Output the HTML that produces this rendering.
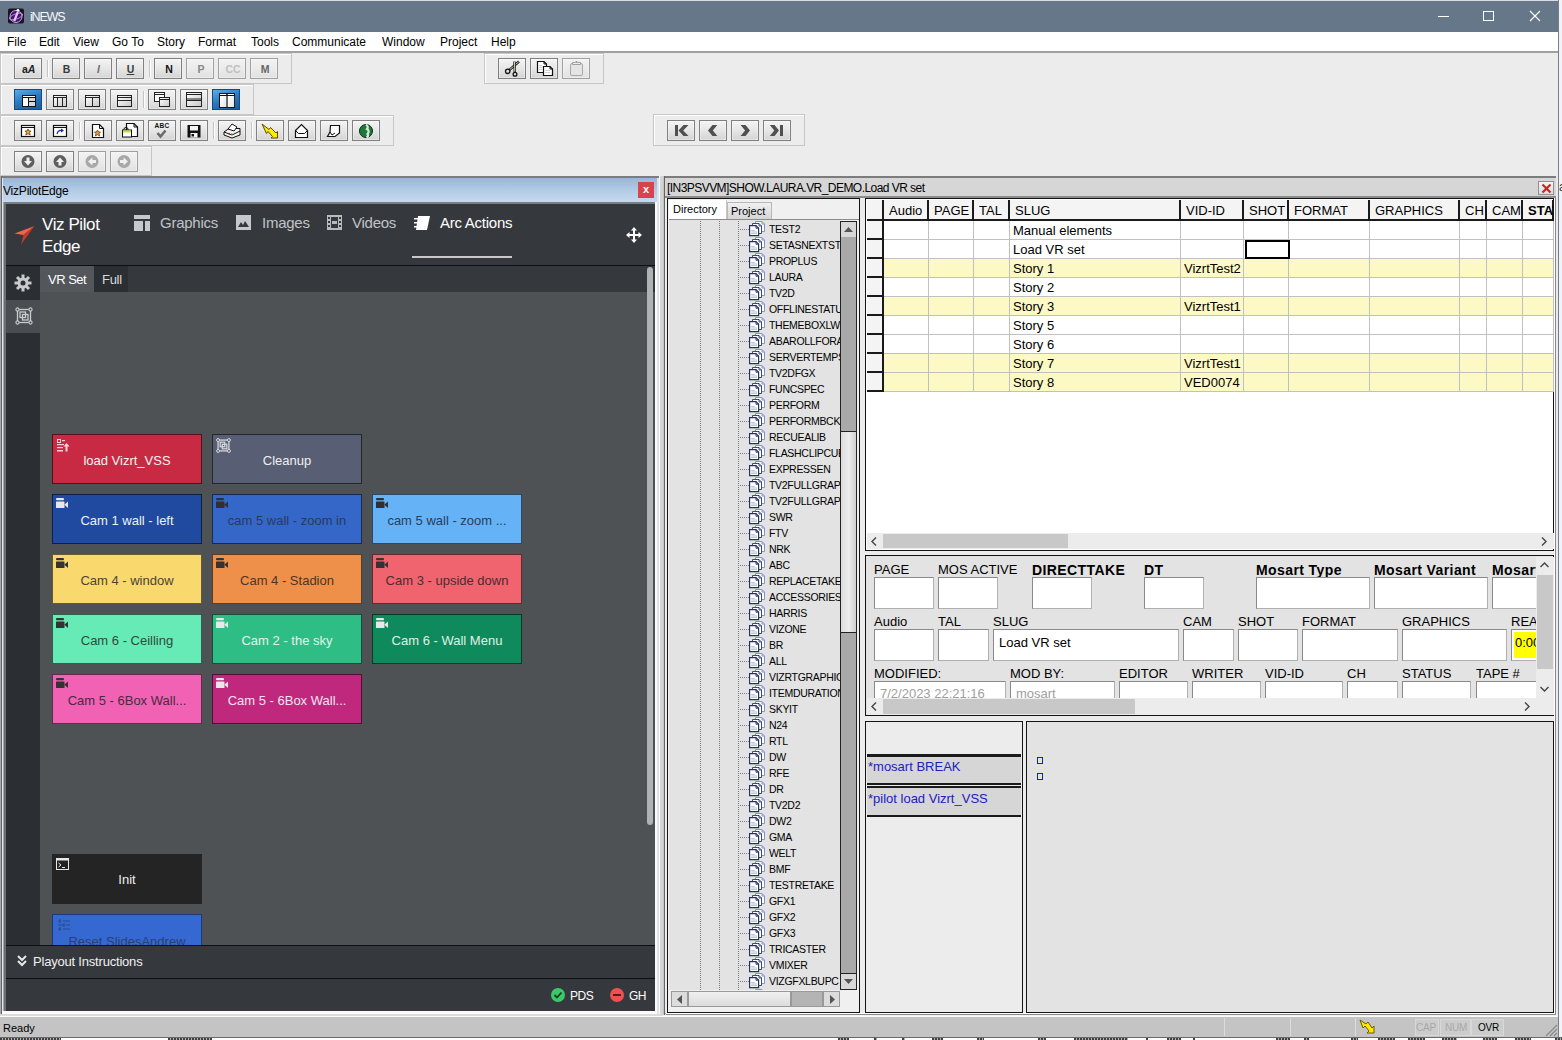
<!DOCTYPE html><html><head><meta charset="utf-8"><style>
*{margin:0;padding:0;box-sizing:border-box}
html,body{width:1562px;height:1040px;overflow:hidden;background:#f0f4f8;font-family:"Liberation Sans",sans-serif;}
div{position:absolute}
.t{white-space:nowrap;line-height:1}
.tb{border:1px solid #808080;background:linear-gradient(#f4f4f4,#e6e6e6 50%,#d4d4d4);box-shadow:inset 0 0 0 1px rgba(255,255,255,0.35);}
.tbd{border:1px solid #a0a0a0;background:linear-gradient(#f2f2f2,#ebebeb 50%,#e0e0e0);box-shadow:inset 0 0 0 1px rgba(255,255,255,0.35);}
.tbsel{border:1px solid #174a7c;background:linear-gradient(160deg,#58aee8,#2a78c0 50%,#1a5a9a);}
.grp{border:1px solid #c8c8c8;border-left-color:#fff;border-top-color:#fff;}
</style></head><body>
<div style="left:0px;top:0px;width:1559px;height:32px;background:#66778a;border-top:1px solid #d8dde3"></div>
<svg style="position:absolute;left:8px;top:8px" width="16" height="16" viewBox="0 0 16 16"><rect x="0" y="0.5" width="16" height="15" rx="2" fill="#1c1224"/><circle cx="8" cy="8.5" r="6" fill="#40156a" stroke="#d8b8f0" stroke-width="0.9"/><ellipse cx="8" cy="8.5" rx="7" ry="2.6" transform="rotate(-20 8 8.5)" fill="none" stroke="#c8a0e8" stroke-width="0.8"/><path d="M9.8 4 L6.2 13" stroke="#e8c8ff" stroke-width="2.2"/><circle cx="10" cy="2.3" r="1.4" fill="#fff"/></svg>
<div class="t" style="left:30px;top:11px;color:#f4f8ff;font-size:12.5px;letter-spacing:-1.2px">iNEWS</div>
<div style="left:1438px;top:16px;width:11px;height:1px;background:#fff"></div>
<div style="left:1483px;top:11px;width:11px;height:10px;border:1px solid #fff"></div>
<svg style="position:absolute;left:1529px;top:10px" width="12" height="12" viewBox="0 0 12 12"><path d="M1 1L11 11M11 1L1 11" stroke="#fff" stroke-width="1.2"/></svg>
<div style="left:1558px;top:0px;width:1px;height:1040px;background:#7a7e82"></div>
<div class="t" style="left:1559px;top:181px;font-size:12px;color:#333">a</div>
<div style="left:0px;top:32px;width:1558px;height:19px;background:#fff"></div>
<div class="t" style="left:7px;top:36px;color:#000;font-size:12px">File</div>
<div class="t" style="left:39px;top:36px;color:#000;font-size:12px">Edit</div>
<div class="t" style="left:73px;top:36px;color:#000;font-size:12px">View</div>
<div class="t" style="left:112px;top:36px;color:#000;font-size:12px">Go To</div>
<div class="t" style="left:157px;top:36px;color:#000;font-size:12px">Story</div>
<div class="t" style="left:198px;top:36px;color:#000;font-size:12px">Format</div>
<div class="t" style="left:251px;top:36px;color:#000;font-size:12px">Tools</div>
<div class="t" style="left:292px;top:36px;color:#000;font-size:12px">Communicate</div>
<div class="t" style="left:382px;top:36px;color:#000;font-size:12px">Window</div>
<div class="t" style="left:440px;top:36px;color:#000;font-size:12px">Project</div>
<div class="t" style="left:491px;top:36px;color:#000;font-size:12px">Help</div>
<div style="left:0px;top:51px;width:1558px;height:2px;background:#a0a0a0"></div>
<div style="left:0px;top:53px;width:1558px;height:123px;background:#ececec"></div>
<div style="left:0px;top:53px;width:1px;height:123px;background:#a0a0a0"></div>
<div style="left:0px;top:53px;width:292px;height:31px;border:1px solid #c6c6c6;box-shadow:inset 1px 1px 0 #fff"></div>
<div style="left:0px;top:84px;width:254px;height:31px;border:1px solid #c6c6c6;box-shadow:inset 1px 1px 0 #fff"></div>
<div style="left:0px;top:115px;width:394px;height:31px;border:1px solid #c6c6c6;box-shadow:inset 1px 1px 0 #fff"></div>
<div style="left:0px;top:146px;width:152px;height:30px;border:1px solid #c6c6c6;box-shadow:inset 1px 1px 0 #fff"></div>
<div style="left:484px;top:53px;width:120px;height:31px;border:1px solid #c6c6c6;box-shadow:inset 1px 1px 0 #fff"></div>
<div style="left:653px;top:114px;width:152px;height:32px;border:1px solid #c6c6c6;box-shadow:inset 1px 1px 0 #fff"></div>
<div class="tb" style="left:14px;top:58px;width:28px;height:21px;"><div class="t" style="left:7px;top:5px;font-size:10.5px;font-weight:bold;color:#222"><span>a</span><i>A</i></div></div>
<div style="left:47px;top:60px;width:2px;height:17px;background:#c4c4c4;border-right:1px solid #fff"></div>
<div class="tb" style="left:52px;top:58px;width:28px;height:21px;"><div class="t" style="left:0;width:27px;text-align:center;top:5px;font-size:10.5px;color:#3a3a3a;font-weight:bold">B</div></div>
<div class="tb" style="left:84px;top:58px;width:28px;height:21px;"><div class="t" style="left:0;width:27px;text-align:center;top:5px;font-size:10.5px;color:#707070;font-weight:bold;font-style:italic">I</div></div>
<div class="tb" style="left:116px;top:58px;width:28px;height:21px;"><div class="t" style="left:0;width:27px;text-align:center;top:5px;font-size:10.5px;color:#3a3a3a;font-weight:bold;text-decoration:underline">U</div></div>
<div style="left:149px;top:60px;width:2px;height:17px;background:#c4c4c4;border-right:1px solid #fff"></div>
<div class="tb" style="left:154px;top:58px;width:28px;height:21px;"><div class="t" style="left:0;width:28px;text-align:center;top:5px;font-size:10.5px;font-weight:bold;color:#111">N</div></div>
<div class="tbd" style="left:186px;top:58px;width:28px;height:21px;"><div class="t" style="left:0;width:28px;text-align:center;top:5px;font-size:10.5px;font-weight:bold;color:#888">P</div></div>
<div class="tbd" style="left:218px;top:58px;width:28px;height:21px;"><div class="t" style="left:0;width:28px;text-align:center;top:5px;font-size:10.5px;font-weight:bold;color:#c0c0c0">CC</div></div>
<div class="tbd" style="left:250px;top:58px;width:28px;height:21px;"><div class="t" style="left:0;width:28px;text-align:center;top:5px;font-size:10.5px;font-weight:bold;color:#666">M</div></div>
<svg width="0" height="0" style="position:absolute"><defs><linearGradient id="pg" x1="0" y1="0" x2="1" y2="1"><stop offset="0" stop-color="#fff"/><stop offset="1" stop-color="#c8c8c8"/></linearGradient></defs></svg>
<div class="tbsel" style="left:14px;top:89px;width:28px;height:21px;"><svg style="position:absolute;left:-1px;top:-1px" width="28" height="21" viewBox="0 0 28 21"><rect x="8.5" y="6.5" width="13" height="11" fill="#fff" stroke="#111"/><path d="M8.5 8.5H21.5M14.5 8.5V17.5M14.5 12.5H21.5" stroke="#111"/><rect x="15" y="9" width="6" height="3" fill="#d8d8d8"/><rect x="15" y="13" width="6" height="4" fill="#d8d8d8"/></svg></div>
<div class="tb" style="left:46px;top:89px;width:28px;height:21px;"><svg style="position:absolute;left:-1px;top:-1px" width="28" height="21" viewBox="0 0 28 21"><rect x="7.5" y="6.5" width="13" height="11" fill="url(#pg)" stroke="#222"/><path d="M7.5 8.5H20.5M11.5 8.5V17.5M16.5 8.5V17.5" stroke="#222"/></svg></div>
<div class="tb" style="left:78px;top:89px;width:28px;height:21px;"><svg style="position:absolute;left:-1px;top:-1px" width="28" height="21" viewBox="0 0 28 21"><rect x="7.5" y="6.5" width="14" height="11" fill="url(#pg)" stroke="#222"/><path d="M7.5 8.5H21.5M14.5 8.5V17.5" stroke="#222"/></svg></div>
<div class="tb" style="left:110px;top:89px;width:28px;height:21px;"><svg style="position:absolute;left:-1px;top:-1px" width="28" height="21" viewBox="0 0 28 21"><rect x="7.5" y="6.5" width="14" height="11" fill="url(#pg)" stroke="#222"/><path d="M7.5 8.5H21.5M7.5 11.5H21.5" stroke="#222"/></svg></div>
<div style="left:143px;top:91px;width:2px;height:17px;background:#c4c4c4;border-right:1px solid #fff"></div>
<div class="tb" style="left:148px;top:89px;width:28px;height:21px;"><svg style="position:absolute;left:-1px;top:-1px" width="28" height="21" viewBox="0 0 28 21"><rect x="6.5" y="3.5" width="10" height="9" fill="#fff" stroke="#222"/><path d="M6.5 5.5H16.5" stroke="#222"/><rect x="11.5" y="8.5" width="10" height="9" fill="url(#pg)" stroke="#222"/><path d="M11.5 10.5H21.5" stroke="#222"/></svg></div>
<div class="tb" style="left:180px;top:89px;width:28px;height:21px;"><svg style="position:absolute;left:-1px;top:-1px" width="28" height="21" viewBox="0 0 28 21"><rect x="6.5" y="3.5" width="15" height="14" fill="url(#pg)" stroke="#222"/><path d="M6.5 5.5H21.5M6.5 10H21.5M6.5 11.5H21.5" stroke="#222"/></svg></div>
<div class="tbsel" style="left:212px;top:89px;width:28px;height:21px;"><svg style="position:absolute;left:-1px;top:-1px" width="28" height="21" viewBox="0 0 28 21"><rect x="7.5" y="4.5" width="15" height="14" fill="#fff" stroke="#111"/><path d="M15 4.5V18.5" stroke="#111" stroke-width="1.5"/><path d="M7.5 6.5H22.5" stroke="#111"/><rect x="8" y="7" width="6.5" height="11" fill="url(#pg)" opacity="0.5"/><rect x="15.7" y="7" width="6.5" height="11" fill="url(#pg)" opacity="0.5"/></svg></div>
<div class="tb" style="left:14px;top:120px;width:28px;height:21px;"><svg style="position:absolute;left:-1px;top:-1px" width="28" height="21" viewBox="0 0 28 21"><rect x="7.5" y="5.5" width="13" height="11" fill="#fff" stroke="#111" stroke-width="1.2"/><path d="M7.5 7.5H20.5" stroke="#111"/><path d="M14 9 L15 11 L17 11 L15.5 12.7 L16.2 15 L14 13.6 L11.8 15 L12.5 12.7 L11 11 L13 11 Z" fill="#f0a040" stroke="#6a3a10" stroke-width="0.8"/></svg></div>
<div class="tb" style="left:46px;top:120px;width:28px;height:21px;"><svg style="position:absolute;left:-1px;top:-1px" width="28" height="21" viewBox="0 0 28 21"><rect x="7.5" y="5.5" width="13" height="11" fill="#fff" stroke="#111" stroke-width="1.2"/><path d="M7.5 7.5H20.5" stroke="#111"/><path d="M11 14 Q12 10 16 10.5" stroke="#1a2a9a" stroke-width="1.2" fill="none"/><path d="M15 8.5 L18 10.5 L15 12.5 Z" fill="#1a2a9a"/></svg></div>
<div style="left:79px;top:122px;width:2px;height:17px;background:#c4c4c4;border-right:1px solid #fff"></div>
<div class="tb" style="left:84px;top:120px;width:28px;height:21px;"><svg style="position:absolute;left:-1px;top:-1px" width="28" height="21" viewBox="0 0 28 21"><path d="M8.5 4.5H15.5L19.5 8.5V17.5H8.5Z" fill="#fff" stroke="#111" stroke-width="1.2"/><path d="M15.5 4.5V8.5H19.5" stroke="#111" fill="none"/><path d="M13.5 10 L14.5 12 L16.5 12 L15.0 13.7 L15.7 16 L13.5 14.6 L11.3 16 L12.0 13.7 L10.5 12 L12.5 12 Z" fill="#f0a040" stroke="#6a3a10" stroke-width="0.8"/></svg></div>
<div class="tb" style="left:116px;top:120px;width:28px;height:21px;"><svg style="position:absolute;left:-1px;top:-1px" width="28" height="21" viewBox="0 0 28 21"><path d="M10.5 3.5H18L21.5 7V16.5H10.5Z" fill="#fff" stroke="#111" stroke-width="1.2"/><path d="M18 3.5V7H21.5" stroke="#111" fill="none"/><path d="M8 10V8.5Q10 6 12 8.5V10" stroke="#111" fill="none"/><rect x="6.5" y="10" width="9" height="7" fill="#fff" stroke="#111"/><rect x="7" y="10.5" width="8" height="2" fill="#c8e040"/></svg></div>
<div class="tb" style="left:148px;top:120px;width:28px;height:21px;"><svg style="position:absolute;left:-1px;top:-1px" width="28" height="21" viewBox="0 0 28 21"><text x="14" y="8" font-family="Liberation Sans" font-size="6.5" font-weight="bold" text-anchor="middle" fill="#111" letter-spacing="0.3">ABC</text><path d="M9.5 13 L12.5 16.5 L17.5 10.5" stroke="#6a6a6a" stroke-width="2.6" fill="none"/></svg></div>
<div class="tb" style="left:180px;top:120px;width:28px;height:21px;"><svg style="position:absolute;left:-1px;top:-1px" width="28" height="21" viewBox="0 0 28 21"><rect x="7.5" y="5" width="13" height="12.5" fill="#111"/><rect x="10" y="6" width="8" height="4.5" fill="#f4f4f4"/><rect x="10.5" y="13" width="7" height="4.5" fill="#f4f4f4"/><rect x="11.5" y="14" width="2.5" height="2.5" fill="#111"/></svg></div>
<div style="left:213px;top:122px;width:2px;height:17px;background:#c4c4c4;border-right:1px solid #fff"></div>
<div class="tb" style="left:218px;top:120px;width:28px;height:21px;"><svg style="position:absolute;left:-1px;top:-1px" width="28" height="21" viewBox="0 0 28 21"><path d="M6 12 L11 8.5 L22 8.5 L22 15 L14 18 L6 15 Z" fill="#f4f4f4" stroke="#111"/><path d="M10 9 L14 4 L19 7 L16 11 Z" fill="#fff" stroke="#111"/><path d="M6 12 L14 15 L22 11" stroke="#111" fill="none"/><rect x="10.5" y="13" width="1.5" height="1.5" fill="#d02020"/><rect x="13" y="13.5" width="1.5" height="1.5" fill="#20a040"/></svg></div>
<div style="left:251px;top:122px;width:2px;height:17px;background:#c4c4c4;border-right:1px solid #fff"></div>
<div class="tb" style="left:256px;top:120px;width:28px;height:21px;"><svg style="position:absolute;left:-1px;top:-1px" width="28" height="21" viewBox="0 0 28 21"><path d="M6 4 L13 9.5 L14.5 7.5 L20 13 L21.5 11.5 L21.5 18 L15 18 L16.5 16.5 L12 11.5 L10.5 13.5 Z" fill="#ffee00" stroke="#5a4a00" stroke-width="1"/></svg></div>
<div class="tb" style="left:288px;top:120px;width:28px;height:21px;"><svg style="position:absolute;left:-1px;top:-1px" width="28" height="21" viewBox="0 0 28 21"><path d="M7.5 10.5 L13.5 4.5 L19.5 10.5 V17.5 H7.5 Z" fill="#fff" stroke="#111" stroke-width="1.2"/><path d="M7.5 10.5 L10.5 13.5 H16.5 L19.5 10.5" stroke="#111" fill="none"/></svg></div>
<div class="tb" style="left:320px;top:120px;width:28px;height:21px;"><svg style="position:absolute;left:-1px;top:-1px" width="28" height="21" viewBox="0 0 28 21"><path d="M10.5 5.5 H19.5 V13 L15 16.5 H7.5 L10 12 Z" fill="#fff" stroke="#111" stroke-width="1.2"/><path d="M10 12 L12 15 L15 13" stroke="#111" fill="none"/></svg></div>
<div class="tb" style="left:352px;top:120px;width:28px;height:21px;"><svg style="position:absolute;left:-1px;top:-1px" width="28" height="21" viewBox="0 0 28 21"><circle cx="14" cy="11" r="6.5" fill="#1a7a3a" stroke="#0a2a10" stroke-width="1"/><path d="M14 4.5 Q17 7 15 9 Q18 11 15.5 14 Q17 16 14.5 17.5" stroke="#d8e8d8" stroke-width="2.2" fill="none"/></svg></div>
<div class="tb" style="left:667px;top:120px;width:28px;height:21px;"><svg style="position:absolute;left:-1px;top:-1px" width="28" height="21" viewBox="0 0 28 21"><rect x="8" y="5" width="3" height="11" fill="#505050"/><path d="M21.5 5 L16.5 5 L11.5 10.5 L16.5 16 L21.5 16 L16.2 10.5 Z" fill="#505050"/></svg></div>
<div class="tb" style="left:699px;top:120px;width:28px;height:21px;"><svg style="position:absolute;left:-1px;top:-1px" width="28" height="21" viewBox="0 0 28 21"><path d="M18.3 5 L13.5 5 L9 10.5 L13.5 16 L18.3 16 L13.8 10.5 Z" fill="#505050"/></svg></div>
<div class="tb" style="left:731px;top:120px;width:28px;height:21px;"><svg style="position:absolute;left:-1px;top:-1px" width="28" height="21" viewBox="0 0 28 21"><path d="M9.6 5 L14.5 5 L19 10.5 L14.5 16 L9.6 16 L14.1 10.5 Z" fill="#505050"/></svg></div>
<div class="tb" style="left:763px;top:120px;width:28px;height:21px;"><svg style="position:absolute;left:-1px;top:-1px" width="28" height="21" viewBox="0 0 28 21"><rect x="17" y="5" width="3" height="11" fill="#505050"/><path d="M6.8 5 L11.5 5 L16 10.5 L11.5 16 L6.8 16 L11.3 10.5 Z" fill="#505050"/></svg></div>
<div class="tb" style="left:14px;top:151px;width:28px;height:21px;"><svg style="position:absolute;left:-1px;top:-1px" width="28" height="21" viewBox="0 0 28 21"><circle cx="14" cy="10.5" r="6.5" fill="#5e5e5e"/><path d="M12.5 6.5H15.5V10H18L14 14.5L10 10H12.5Z" fill="#f0f0f0"/></svg></div>
<div class="tb" style="left:46px;top:151px;width:28px;height:21px;"><svg style="position:absolute;left:-1px;top:-1px" width="28" height="21" viewBox="0 0 28 21"><circle cx="14" cy="10.5" r="6.5" fill="#5e5e5e"/><path d="M12.5 14.5H15.5V11H18L14 6.5L10 11H12.5Z" fill="#f0f0f0"/></svg></div>
<div class="tbd" style="left:78px;top:151px;width:28px;height:21px;"><svg style="position:absolute;left:-1px;top:-1px" width="28" height="21" viewBox="0 0 28 21"><circle cx="14" cy="10.5" r="6.5" fill="#a8a8a8"/><path d="M18 9H14.5V6.5L10 10.5L14.5 14.5V12H18Z" fill="#f0f0f0"/></svg></div>
<div class="tbd" style="left:110px;top:151px;width:28px;height:21px;"><svg style="position:absolute;left:-1px;top:-1px" width="28" height="21" viewBox="0 0 28 21"><circle cx="14" cy="10.5" r="6.5" fill="#a8a8a8"/><path d="M10 9H13.5V6.5L18 10.5L13.5 14.5V12H10Z" fill="#f0f0f0"/></svg></div>
<div class="tb" style="left:498px;top:58px;width:28px;height:21px;"><svg style="position:absolute;left:-1px;top:-1px" width="28" height="21" viewBox="0 0 28 21"><path d="M11.5 11.8 L21 3.5" stroke="#111" stroke-width="2.4"/><path d="M11.8 11.5 L20.8 3.7" stroke="#f4f4c8" stroke-width="0.9"/><path d="M16.8 14 L16.5 3.5" stroke="#111" stroke-width="2.4"/><path d="M16.8 13.8 L16.5 3.7" stroke="#f4f4c8" stroke-width="0.9"/><circle cx="9.7" cy="13.3" r="2.2" fill="none" stroke="#111" stroke-width="1.3"/><circle cx="17" cy="16.3" r="1.9" fill="none" stroke="#111" stroke-width="1.3"/></svg></div>
<div class="tb" style="left:530px;top:58px;width:28px;height:21px;"><svg style="position:absolute;left:-1px;top:-1px" width="28" height="21" viewBox="0 0 28 21"><g transform="translate(-1,0)"><path d="M8.5 3.5H15L17.5 6V14.5H8.5Z" fill="#fff" stroke="#111" stroke-width="1.2"/><path d="M15 3.5V6H17.5" fill="none" stroke="#111"/><path d="M14.5 8.5H21L23.5 11V17.5H14.5Z" fill="#fff" stroke="#111" stroke-width="1.2"/><path d="M21 8.5V11H23.5" fill="none" stroke="#111"/><path d="M10 7.5h3M10 9.5h3M10 11.5h3M16 12.5h5M16 14.5h5" stroke="#a0a0a0" stroke-width="0.5"/></g></svg></div>
<div class="tbd" style="left:562px;top:58px;width:28px;height:21px;"><svg style="position:absolute;left:-1px;top:-1px" width="28" height="21" viewBox="0 0 28 21"><rect x="8.5" y="5.5" width="12" height="12" rx="1.5" fill="#e4e4e4" stroke="#a8a8a8"/><path d="M10.5 6.5 V4.5 H13 Q14.5 2.5 16 4.5 H18.5 V6.5 Z" fill="#ececec" stroke="#a0a0a0"/><circle cx="14.5" cy="4.3" r="0.8" fill="#909090"/></svg></div>
<div style="left:0px;top:176px;width:663px;height:841px;background:#d4d4d4"></div>
<div style="left:0px;top:176px;width:660px;height:2px;background:#7c7c7c"></div>
<div style="left:0px;top:176px;width:1px;height:838px;background:#a6aaae"></div>
<div style="left:1px;top:176px;width:1px;height:838px;background:#62666a"></div>
<div style="left:2px;top:178px;width:1px;height:836px;background:#e4e8ec"></div>
<div style="left:3px;top:202px;width:1px;height:812px;background:#a0a4a8"></div>
<div style="left:4px;top:202px;width:2px;height:809px;background:#6a6e72"></div>
<div style="left:655px;top:202px;width:2px;height:812px;background:#fbfbfb"></div>
<div style="left:657px;top:178px;width:2px;height:836px;background:#dfe2e6"></div>
<div style="left:659px;top:176px;width:1px;height:838px;background:#fbfbfb"></div>
<div style="left:2px;top:1011px;width:655px;height:3px;background:#fbfbfb"></div>
<div style="left:0px;top:1014px;width:663px;height:2px;background:#dcdcdc"></div>
<div style="left:3px;top:178px;width:654px;height:24px;background:linear-gradient(#98b6da,#b4cce6 55%,#c6daee)"></div>
<div class="t" style="left:3px;top:185px;color:#000;font-size:12px;letter-spacing:-0.2px">VizPilotEdge</div>
<div style="left:638px;top:182px;width:16px;height:16px;background:#d9434a"><div class="t" style="left:0;width:16px;text-align:center;top:2px;color:#fff;font-size:11px;font-weight:bold">x</div></div>
<div style="left:4px;top:202px;width:651px;height:2px;background:#7a7e82"></div>
<div style="left:6px;top:204px;width:649px;height:807px;background:#35383c"></div>
<div style="left:6px;top:204px;width:649px;height:61px;background:#35383c"></div>
<svg style="position:absolute;left:14px;top:225px" width="21" height="20" viewBox="0 0 21 20"><path d="M20.5 1 L0.5 8.5 L9.5 10 Z" fill="#f2644a"/><path d="M20.5 1 L9.5 10 L7 19.5 Z" fill="#c63a2c"/></svg>
<div class="t" style="left:42px;top:216px;color:#fff;font-size:17px;letter-spacing:-0.4px">Viz Pilot</div>
<div class="t" style="left:42px;top:238px;color:#fff;font-size:17px;letter-spacing:-0.4px">Edge</div>
<svg style="position:absolute;left:134px;top:215px" width="16" height="16" viewBox="0 0 16 16"><rect x="0" y="0" width="16" height="4" fill="#c6c9cc"/><rect x="0" y="6" width="9" height="10" fill="#c6c9cc"/><rect x="11" y="6" width="5" height="10" fill="#c6c9cc"/></svg>
<div class="t" style="left:160px;top:215px;color:#c0c4c8;font-size:15px;letter-spacing:-0.25px">Graphics</div>
<svg style="position:absolute;left:236px;top:215px" width="15" height="15" viewBox="0 0 15 15"><rect x="0" y="0" width="15" height="15" fill="#c6c9cc"/><path d="M2 12 L5 7 L7 10 L9 6 L13 12 Z" fill="#35383c"/></svg>
<div class="t" style="left:262px;top:215px;color:#c0c4c8;font-size:15px;letter-spacing:-0.25px">Images</div>
<svg style="position:absolute;left:327px;top:215px" width="15" height="15" viewBox="0 0 15 15"><rect x="0" y="0" width="15" height="15" fill="#b8bbbe"/><rect x="4" y="2" width="7" height="11" fill="#35383c"/><rect x="5" y="6" width="5" height="3" fill="#b8bbbe"/><rect x="1" y="2" width="2" height="2" fill="#35383c"/><rect x="1" y="6" width="2" height="2" fill="#35383c"/><rect x="1" y="10" width="2" height="2" fill="#35383c"/><rect x="12" y="2" width="2" height="2" fill="#35383c"/><rect x="12" y="6" width="2" height="2" fill="#35383c"/><rect x="12" y="10" width="2" height="2" fill="#35383c"/></svg>
<div class="t" style="left:352px;top:215px;color:#c0c4c8;font-size:15px;letter-spacing:-0.25px">Videos</div>
<svg style="position:absolute;left:414px;top:216px" width="16" height="14" viewBox="0 0 16 14"><path d="M4 0 L16 0 L13 14 L2 14 Z" fill="#fff"/><rect x="0" y="2" width="4" height="1.5" fill="#fff"/><rect x="0" y="6" width="4" height="1.5" fill="#fff"/><rect x="0" y="10" width="4" height="1.5" fill="#fff"/></svg>
<div class="t" style="left:440px;top:215px;color:#fff;font-size:15px;letter-spacing:-0.25px">Arc Actions</div>
<div style="left:412px;top:256px;width:100px;height:2px;background:#c8c8c8"></div>
<svg style="position:absolute;left:626px;top:227px" width="16" height="16" viewBox="0 0 16 16"><path d="M8 0 L11 3.5 L9 3.5 L9 7 L12.5 7 L12.5 5 L16 8 L12.5 11 L12.5 9 L9 9 L9 12.5 L11 12.5 L8 16 L5 12.5 L7 12.5 L7 9 L3.5 9 L3.5 11 L0 8 L3.5 5 L3.5 7 L7 7 L7 3.5 L5 3.5 Z" fill="#fff"/></svg>
<div style="left:6px;top:265px;width:649px;height:1px;background:#0e0f10"></div>
<div style="left:6px;top:266px;width:649px;height:26px;background:#35383c"></div>
<div style="left:40px;top:292px;width:615px;height:653px;background:#4e5254"></div>
<div style="left:6px;top:266px;width:34px;height:679px;background:#2b2e32"></div>
<div style="left:6px;top:300px;width:34px;height:33px;background:#4a4e52"></div>
<svg style="position:absolute;left:14px;top:274px" width="18" height="18" viewBox="0 0 18 18"><g fill="#c8cacc"><circle cx="9" cy="9" r="5.5"/><rect x="7.5" y="0.5" width="3" height="17"/><rect x="0.5" y="7.5" width="17" height="3"/><rect x="7.5" y="0.5" width="3" height="17" transform="rotate(45 9 9)"/><rect x="7.5" y="0.5" width="3" height="17" transform="rotate(-45 9 9)"/></g><circle cx="9" cy="9" r="2.5" fill="#2b2e32"/></svg>
<svg style="position:absolute;left:15px;top:307px" width="18" height="18" viewBox="0 0 18 18"><g fill="none" stroke="#c8cacc" stroke-width="1.3"><rect x="2.5" y="2.5" width="13" height="13"/><rect x="5" y="5" width="5.5" height="5.5" fill="#4a4e52"/><rect x="7.5" y="7.5" width="5.5" height="5.5"/></g><g fill="#4a4e52" stroke="#c8cacc" stroke-width="1.1"><circle cx="2.5" cy="2.5" r="1.6"/><circle cx="15.5" cy="2.5" r="1.6"/><circle cx="2.5" cy="15.5" r="1.6"/><circle cx="15.5" cy="15.5" r="1.6"/></g></svg>
<div style="left:40px;top:266px;width:54px;height:26px;background:#53575b"></div>
<div class="t" style="left:48px;top:273px;color:#fff;font-size:13px;letter-spacing:-0.5px">VR Set</div>
<div style="left:94px;top:266px;width:34px;height:26px;background:#2b2e32"></div>
<div class="t" style="left:102px;top:273px;color:#d8dadc;font-size:13px;letter-spacing:-0.3px">Full</div>
<div style="left:647px;top:267px;width:6px;height:558px;background:#aeb2b4;border-radius:3px"></div>
<div style="left:52px;top:434px;width:150px;height:50px;background:#c92a43;border:1px solid #54111c"><svg style="position:absolute;left:4px;top:4px" width="13" height="13" viewBox="0 0 13 13"><g fill="#f4d4da"><rect x="0" y="0" width="4" height="4"/><rect x="5" y="1" width="3" height="1.2"/><rect x="0" y="5" width="7" height="1.2"/><rect x="0" y="8" width="6" height="1.2"/><rect x="0" y="11" width="6" height="1.5"/><path d="M9.5 4 L12.5 7.5 L10.5 7.5 L10.5 12.5 L8.5 12.5 L8.5 7.5 L6.5 7.5 Z"/></g><rect x="1" y="1" width="2" height="2" fill="#cf2a45"/></svg><div class="t" style="left:0;width:148px;text-align:center;top:19px;font-size:13px;color:#f4f4f4;">load Vizrt_VSS</div></div>
<div style="left:212px;top:434px;width:150px;height:50px;background:#585f74;border:1px solid #242730"><svg style="position:absolute;left:3px;top:3px" width="15" height="15" viewBox="0 0 18 18"><g fill="none" stroke="#d8dae0" stroke-width="1.5"><rect x="2.5" y="2.5" width="13" height="13"/><rect x="5" y="5" width="5.5" height="5.5" fill="#585f74"/><rect x="7.5" y="7.5" width="5.5" height="5.5"/></g><g fill="#585f74" stroke="#d8dae0" stroke-width="1.2"><circle cx="2.5" cy="2.5" r="1.8"/><circle cx="15.5" cy="2.5" r="1.8"/><circle cx="2.5" cy="15.5" r="1.8"/><circle cx="15.5" cy="15.5" r="1.8"/></g></svg><div class="t" style="left:0;width:148px;text-align:center;top:19px;font-size:13px;color:#f0f0f0;">Cleanup</div></div>
<div style="left:52px;top:494px;width:150px;height:50px;background:#1f4aa0;border:1px solid #0d1f43"><svg style="position:absolute;left:3px;top:3px" width="13" height="11" viewBox="0 0 13 11"><rect x="0" y="0" width="8" height="2.2" rx="1" fill="#e8e8e8"/><rect x="0" y="3.4" width="8.5" height="6.6" rx="0.6" fill="#e8e8e8"/><path d="M8.3 6.7 L12 3.6 L12 10 Z" fill="#e8e8e8"/></svg><div class="t" style="left:0;width:148px;text-align:center;top:19px;font-size:13px;color:#f0f0f0;">Cam 1 wall - left</div></div>
<div style="left:212px;top:494px;width:150px;height:50px;background:#3567c8;border:1px solid #162b54"><svg style="position:absolute;left:3px;top:3px" width="13" height="11" viewBox="0 0 13 11"><rect x="0" y="0" width="8" height="2.2" rx="1" fill="#303030"/><rect x="0" y="3.4" width="8.5" height="6.6" rx="0.6" fill="#303030"/><path d="M8.3 6.7 L12 3.6 L12 10 Z" fill="#303030"/></svg><div class="t" style="left:0;width:148px;text-align:center;top:19px;font-size:13px;color:#2b3a5a;">cam 5 wall - zoom in</div></div>
<div style="left:372px;top:494px;width:150px;height:50px;background:#65b2f6;border:1px solid #2a4a67"><svg style="position:absolute;left:3px;top:3px" width="13" height="11" viewBox="0 0 13 11"><rect x="0" y="0" width="8" height="2.2" rx="1" fill="#303030"/><rect x="0" y="3.4" width="8.5" height="6.6" rx="0.6" fill="#303030"/><path d="M8.3 6.7 L12 3.6 L12 10 Z" fill="#303030"/></svg><div class="t" style="left:0;width:148px;text-align:center;top:19px;font-size:13px;color:#2a3f55;">cam 5 wall - zoom ...</div></div>
<div style="left:52px;top:554px;width:150px;height:50px;background:#f9d86e;border:1px solid #685a2e"><svg style="position:absolute;left:3px;top:3px" width="13" height="11" viewBox="0 0 13 11"><rect x="0" y="0" width="8" height="2.2" rx="1" fill="#333"/><rect x="0" y="3.4" width="8.5" height="6.6" rx="0.6" fill="#333"/><path d="M8.3 6.7 L12 3.6 L12 10 Z" fill="#333"/></svg><div class="t" style="left:0;width:148px;text-align:center;top:19px;font-size:13px;color:#4a4536;">Cam 4 - window</div></div>
<div style="left:212px;top:554px;width:150px;height:50px;background:#ee8f4a;border:1px solid #633c1f"><svg style="position:absolute;left:3px;top:3px" width="13" height="11" viewBox="0 0 13 11"><rect x="0" y="0" width="8" height="2.2" rx="1" fill="#333"/><rect x="0" y="3.4" width="8.5" height="6.6" rx="0.6" fill="#333"/><path d="M8.3 6.7 L12 3.6 L12 10 Z" fill="#333"/></svg><div class="t" style="left:0;width:148px;text-align:center;top:19px;font-size:13px;color:#4a3526;">Cam 4 - Stadion</div></div>
<div style="left:372px;top:554px;width:150px;height:50px;background:#f06470;border:1px solid #642a2f"><svg style="position:absolute;left:3px;top:3px" width="13" height="11" viewBox="0 0 13 11"><rect x="0" y="0" width="8" height="2.2" rx="1" fill="#333"/><rect x="0" y="3.4" width="8.5" height="6.6" rx="0.6" fill="#333"/><path d="M8.3 6.7 L12 3.6 L12 10 Z" fill="#333"/></svg><div class="t" style="left:0;width:148px;text-align:center;top:19px;font-size:13px;color:#4a2c30;">Cam 3 - upside down</div></div>
<div style="left:52px;top:614px;width:150px;height:50px;background:#66ebb6;border:1px solid #2a624c"><svg style="position:absolute;left:3px;top:3px" width="13" height="11" viewBox="0 0 13 11"><rect x="0" y="0" width="8" height="2.2" rx="1" fill="#333"/><rect x="0" y="3.4" width="8.5" height="6.6" rx="0.6" fill="#333"/><path d="M8.3 6.7 L12 3.6 L12 10 Z" fill="#333"/></svg><div class="t" style="left:0;width:148px;text-align:center;top:19px;font-size:13px;color:#2e4a3e;">Cam 6 - Ceilling</div></div>
<div style="left:212px;top:614px;width:150px;height:50px;background:#2fbd86;border:1px solid #134f38"><svg style="position:absolute;left:3px;top:3px" width="13" height="11" viewBox="0 0 13 11"><rect x="0" y="0" width="8" height="2.2" rx="1" fill="#e8e8e8"/><rect x="0" y="3.4" width="8.5" height="6.6" rx="0.6" fill="#e8e8e8"/><path d="M8.3 6.7 L12 3.6 L12 10 Z" fill="#e8e8e8"/></svg><div class="t" style="left:0;width:148px;text-align:center;top:19px;font-size:13px;color:#e0f4ea;">Cam 2 - the sky</div></div>
<div style="left:372px;top:614px;width:150px;height:50px;background:#0f8a5c;border:1px solid #063926"><svg style="position:absolute;left:3px;top:3px" width="13" height="11" viewBox="0 0 13 11"><rect x="0" y="0" width="8" height="2.2" rx="1" fill="#e8e8e8"/><rect x="0" y="3.4" width="8.5" height="6.6" rx="0.6" fill="#e8e8e8"/><path d="M8.3 6.7 L12 3.6 L12 10 Z" fill="#e8e8e8"/></svg><div class="t" style="left:0;width:148px;text-align:center;top:19px;font-size:13px;color:#e0f0e8;">Cam 6 - Wall Menu</div></div>
<div style="left:52px;top:674px;width:150px;height:50px;background:#f162b4;border:1px solid #65294b"><svg style="position:absolute;left:3px;top:3px" width="13" height="11" viewBox="0 0 13 11"><rect x="0" y="0" width="8" height="2.2" rx="1" fill="#333"/><rect x="0" y="3.4" width="8.5" height="6.6" rx="0.6" fill="#333"/><path d="M8.3 6.7 L12 3.6 L12 10 Z" fill="#333"/></svg><div class="t" style="left:0;width:148px;text-align:center;top:19px;font-size:13px;color:#4a2a40;">Cam 5 - 6Box Wall...</div></div>
<div style="left:212px;top:674px;width:150px;height:50px;background:#c0287e;border:1px solid #501034"><svg style="position:absolute;left:3px;top:3px" width="13" height="11" viewBox="0 0 13 11"><rect x="0" y="0" width="8" height="2.2" rx="1" fill="#e8e8e8"/><rect x="0" y="3.4" width="8.5" height="6.6" rx="0.6" fill="#e8e8e8"/><path d="M8.3 6.7 L12 3.6 L12 10 Z" fill="#e8e8e8"/></svg><div class="t" style="left:0;width:148px;text-align:center;top:19px;font-size:13px;color:#f4e4ee;">Cam 5 - 6Box Wall...</div></div>
<div style="left:52px;top:854px;width:150px;height:50px;background:#242424"><svg style="position:absolute;left:4px;top:4px" width="14" height="13" viewBox="0 0 14 13"><rect x="0.5" y="0.5" width="12" height="11" fill="none" stroke="#e8e8e8"/><rect x="0.5" y="0.5" width="12" height="2" fill="#e8e8e8"/><path d="M2.5 5 L5 7 L2.5 9 M6 9.5 L9 9.5" stroke="#e8e8e8" fill="none"/></svg><div class="t" style="left:0;width:150px;text-align:center;top:19px;font-size:13px;color:#f0f0f0">Init</div></div>
<div style="left:52px;top:914px;width:150px;height:31px;background:#3568d0;border:1px solid #1a3a80;border-bottom:none;overflow:hidden"><svg style="position:absolute;left:4px;top:4px" width="14" height="13" viewBox="0 0 14 13"><g stroke="#2a4a8a" stroke-width="1.2"><path d="M1 2h3M6 2h7M3 0v4M1 6h6M9 6h4M7 4v4M1 10h3M6 10h7M3 8v4"/></g></svg><div class="t" style="left:0;width:148px;text-align:center;top:20px;font-size:13px;color:#2a4070">Reset SlidesAndrew</div></div>
<div style="left:6px;top:945px;width:649px;height:1px;background:#0e0f10"></div>
<div style="left:6px;top:946px;width:649px;height:32px;background:#35383c"></div>
<svg style="position:absolute;left:17px;top:955px" width="10" height="12" viewBox="0 0 10 12"><path d="M1 1 L5 5 L9 1 M1 6 L5 10 L9 6" stroke="#e8e8e8" stroke-width="2" fill="none"/></svg>
<div class="t" style="left:33px;top:955px;color:#f0f0f0;font-size:13px;letter-spacing:-0.2px">Playout Instructions</div>
<div style="left:6px;top:978px;width:649px;height:1px;background:#0e0f10"></div>
<div style="left:6px;top:979px;width:649px;height:32px;background:#35383c"></div>
<svg style="position:absolute;left:551px;top:988px" width="14" height="14" viewBox="0 0 14 14"><circle cx="7" cy="7" r="7" fill="#3cc86a"/><path d="M3.5 7 L6 9.5 L10.5 4.5" stroke="#14401e" stroke-width="1.8" fill="none"/></svg>
<div class="t" style="left:570px;top:990px;color:#fff;font-size:12px;letter-spacing:-0.5px">PDS</div>
<svg style="position:absolute;left:610px;top:988px" width="14" height="14" viewBox="0 0 14 14"><circle cx="7" cy="7" r="7" fill="#f05050"/><rect x="3" y="6" width="8" height="2" fill="#5a1818"/></svg>
<div class="t" style="left:629px;top:990px;color:#fff;font-size:12px;letter-spacing:-0.5px">GH</div>
<div style="left:663px;top:176px;width:895px;height:841px;background:#ececec"></div>
<div style="left:663px;top:176px;width:895px;height:2px;background:#7c7c7c"></div>
<div style="left:663px;top:176px;width:1px;height:840px;background:#c4c4c4"></div>
<div style="left:664px;top:176px;width:1px;height:840px;background:#646464"></div>
<div style="left:665px;top:196px;width:1px;height:818px;background:#a8a8a8"></div>
<div style="left:666px;top:198px;width:1px;height:816px;background:#f8f8f8"></div>
<div style="left:1556px;top:176px;width:2px;height:841px;background:#e8ecf0"></div>
<div style="left:665px;top:178px;width:891px;height:18px;background:#d6d6d6"></div>
<div class="t" style="left:667px;top:182px;color:#000;font-size:12px;letter-spacing:-0.55px">[IN3PSVVM]SHOW.LAURA.VR_DEMO.Load VR set</div>
<div style="left:1538px;top:181px;width:16px;height:14px;background:linear-gradient(#f4f4f4,#dcdcdc);border:1px solid #909090"><svg style="position:absolute;left:2px;top:1px" width="11" height="11" viewBox="0 0 11 11"><path d="M1.5 1.5L9.5 9.5M9.5 1.5L1.5 9.5" stroke="#c02828" stroke-width="2.2"/></svg></div>
<div style="left:665px;top:196px;width:891px;height:2px;background:#8c8c8c"></div>
<div style="left:665px;top:198px;width:891px;height:815px;background:#ececec"></div>
<div style="left:667px;top:198px;width:193px;height:815px;border:1px solid #141414;background:#f0f0f0"></div>
<div style="left:669px;top:200px;width:190px;height:19px;background:#f0f0f0"></div>
<div style="left:669px;top:200px;width:58px;height:20px;background:#fff;border-right:1px solid #c8c8c8"></div>
<div class="t" style="left:673px;top:204px;color:#000;font-size:11px">Directory</div>
<div style="left:727px;top:202px;width:45px;height:18px;background:linear-gradient(#f0f0f0,#d4d4d4);border:1px solid #b8b8b8;border-bottom:none"></div>
<div class="t" style="left:731px;top:206px;color:#000;font-size:11px">Project</div>
<div style="left:669px;top:219px;width:190px;height:1px;background:#8c8c8c"></div>
<div style="left:669px;top:220px;width:171px;height:773px;background:#e3e3e3;overflow:hidden"></div>
<div style="left:700px;top:221px;width:1px;height:772px;background-image:linear-gradient(#7a7a7a 50%,transparent 50%);background-size:1px 2px"></div>
<div style="left:719px;top:221px;width:1px;height:772px;background-image:linear-gradient(#7a7a7a 50%,transparent 50%);background-size:1px 2px"></div>
<div style="left:738px;top:221px;width:1px;height:772px;background-image:linear-gradient(#7a7a7a 50%,transparent 50%);background-size:1px 2px"></div>
<div style="left:740px;top:229px;width:9px;height:1px;background-image:linear-gradient(90deg,#7a7a7a 50%,transparent 50%);background-size:2px 1px"></div>
<div style="left:749px;top:221px;width:16px;height:16px;"><svg style="position:absolute;left:0;top:0" width="16" height="16" viewBox="0 0 16 16"><path d="M6.5 0.5 H13 L15.5 3 V10.5 H6.5 Z" fill="#fff" stroke="#8494cc"/><path d="M13 0.5 V3 H15.5" fill="none" stroke="#8494cc"/><path d="M3.5 2.5 H10 L12.5 5 V12.5 H3.5 Z" fill="#fff" stroke="#3a4a80"/><path d="M10 2.5 V5 H12.5" fill="none" stroke="#3a4a80"/><path d="M0.6 4.6 H7 L9.6 7.2 V14.6 H0.6 Z" fill="#fff" stroke="#253260" stroke-width="1.2"/><path d="M7 4.6 V7.2 H9.6" fill="none" stroke="#253260"/><path d="M2.2 9.5H5.5M2.2 11H8M2.2 12.6H8" stroke="#9aa4c8" stroke-width="0.7"/></svg></div>
<div class="t" style="left:769px;top:224px;font-size:10.5px;letter-spacing:-0.3px;color:#000;width:71px;overflow:hidden">TEST2</div>
<div style="left:740px;top:245px;width:9px;height:1px;background-image:linear-gradient(90deg,#7a7a7a 50%,transparent 50%);background-size:2px 1px"></div>
<div style="left:749px;top:237px;width:16px;height:16px;"><svg style="position:absolute;left:0;top:0" width="16" height="16" viewBox="0 0 16 16"><path d="M6.5 0.5 H13 L15.5 3 V10.5 H6.5 Z" fill="#fff" stroke="#8494cc"/><path d="M13 0.5 V3 H15.5" fill="none" stroke="#8494cc"/><path d="M3.5 2.5 H10 L12.5 5 V12.5 H3.5 Z" fill="#fff" stroke="#3a4a80"/><path d="M10 2.5 V5 H12.5" fill="none" stroke="#3a4a80"/><path d="M0.6 4.6 H7 L9.6 7.2 V14.6 H0.6 Z" fill="#fff" stroke="#253260" stroke-width="1.2"/><path d="M7 4.6 V7.2 H9.6" fill="none" stroke="#253260"/><path d="M2.2 9.5H5.5M2.2 11H8M2.2 12.6H8" stroke="#9aa4c8" stroke-width="0.7"/></svg></div>
<div class="t" style="left:769px;top:240px;font-size:10.5px;letter-spacing:-0.3px;color:#000;width:71px;overflow:hidden">SETASNEXTSTORY</div>
<div style="left:740px;top:261px;width:9px;height:1px;background-image:linear-gradient(90deg,#7a7a7a 50%,transparent 50%);background-size:2px 1px"></div>
<div style="left:749px;top:253px;width:16px;height:16px;"><svg style="position:absolute;left:0;top:0" width="16" height="16" viewBox="0 0 16 16"><path d="M6.5 0.5 H13 L15.5 3 V10.5 H6.5 Z" fill="#fff" stroke="#8494cc"/><path d="M13 0.5 V3 H15.5" fill="none" stroke="#8494cc"/><path d="M3.5 2.5 H10 L12.5 5 V12.5 H3.5 Z" fill="#fff" stroke="#3a4a80"/><path d="M10 2.5 V5 H12.5" fill="none" stroke="#3a4a80"/><path d="M0.6 4.6 H7 L9.6 7.2 V14.6 H0.6 Z" fill="#fff" stroke="#253260" stroke-width="1.2"/><path d="M7 4.6 V7.2 H9.6" fill="none" stroke="#253260"/><path d="M2.2 9.5H5.5M2.2 11H8M2.2 12.6H8" stroke="#9aa4c8" stroke-width="0.7"/></svg></div>
<div class="t" style="left:769px;top:256px;font-size:10.5px;letter-spacing:-0.3px;color:#000;width:71px;overflow:hidden">PROPLUS</div>
<div style="left:740px;top:277px;width:9px;height:1px;background-image:linear-gradient(90deg,#7a7a7a 50%,transparent 50%);background-size:2px 1px"></div>
<div style="left:749px;top:269px;width:16px;height:16px;"><svg style="position:absolute;left:0;top:0" width="16" height="16" viewBox="0 0 16 16"><path d="M6.5 0.5 H13 L15.5 3 V10.5 H6.5 Z" fill="#fff" stroke="#8494cc"/><path d="M13 0.5 V3 H15.5" fill="none" stroke="#8494cc"/><path d="M3.5 2.5 H10 L12.5 5 V12.5 H3.5 Z" fill="#fff" stroke="#3a4a80"/><path d="M10 2.5 V5 H12.5" fill="none" stroke="#3a4a80"/><path d="M0.6 4.6 H7 L9.6 7.2 V14.6 H0.6 Z" fill="#fff" stroke="#253260" stroke-width="1.2"/><path d="M7 4.6 V7.2 H9.6" fill="none" stroke="#253260"/><path d="M2.2 9.5H5.5M2.2 11H8M2.2 12.6H8" stroke="#9aa4c8" stroke-width="0.7"/></svg></div>
<div class="t" style="left:769px;top:272px;font-size:10.5px;letter-spacing:-0.3px;color:#000;width:71px;overflow:hidden">LAURA</div>
<div style="left:740px;top:293px;width:9px;height:1px;background-image:linear-gradient(90deg,#7a7a7a 50%,transparent 50%);background-size:2px 1px"></div>
<div style="left:749px;top:285px;width:16px;height:16px;"><svg style="position:absolute;left:0;top:0" width="16" height="16" viewBox="0 0 16 16"><path d="M6.5 0.5 H13 L15.5 3 V10.5 H6.5 Z" fill="#fff" stroke="#8494cc"/><path d="M13 0.5 V3 H15.5" fill="none" stroke="#8494cc"/><path d="M3.5 2.5 H10 L12.5 5 V12.5 H3.5 Z" fill="#fff" stroke="#3a4a80"/><path d="M10 2.5 V5 H12.5" fill="none" stroke="#3a4a80"/><path d="M0.6 4.6 H7 L9.6 7.2 V14.6 H0.6 Z" fill="#fff" stroke="#253260" stroke-width="1.2"/><path d="M7 4.6 V7.2 H9.6" fill="none" stroke="#253260"/><path d="M2.2 9.5H5.5M2.2 11H8M2.2 12.6H8" stroke="#9aa4c8" stroke-width="0.7"/></svg></div>
<div class="t" style="left:769px;top:288px;font-size:10.5px;letter-spacing:-0.3px;color:#000;width:71px;overflow:hidden">TV2D</div>
<div style="left:740px;top:309px;width:9px;height:1px;background-image:linear-gradient(90deg,#7a7a7a 50%,transparent 50%);background-size:2px 1px"></div>
<div style="left:749px;top:301px;width:16px;height:16px;"><svg style="position:absolute;left:0;top:0" width="16" height="16" viewBox="0 0 16 16"><path d="M6.5 0.5 H13 L15.5 3 V10.5 H6.5 Z" fill="#fff" stroke="#8494cc"/><path d="M13 0.5 V3 H15.5" fill="none" stroke="#8494cc"/><path d="M3.5 2.5 H10 L12.5 5 V12.5 H3.5 Z" fill="#fff" stroke="#3a4a80"/><path d="M10 2.5 V5 H12.5" fill="none" stroke="#3a4a80"/><path d="M0.6 4.6 H7 L9.6 7.2 V14.6 H0.6 Z" fill="#fff" stroke="#253260" stroke-width="1.2"/><path d="M7 4.6 V7.2 H9.6" fill="none" stroke="#253260"/><path d="M2.2 9.5H5.5M2.2 11H8M2.2 12.6H8" stroke="#9aa4c8" stroke-width="0.7"/></svg></div>
<div class="t" style="left:769px;top:304px;font-size:10.5px;letter-spacing:-0.3px;color:#000;width:71px;overflow:hidden">OFFLINESTATUS</div>
<div style="left:740px;top:325px;width:9px;height:1px;background-image:linear-gradient(90deg,#7a7a7a 50%,transparent 50%);background-size:2px 1px"></div>
<div style="left:749px;top:317px;width:16px;height:16px;"><svg style="position:absolute;left:0;top:0" width="16" height="16" viewBox="0 0 16 16"><path d="M6.5 0.5 H13 L15.5 3 V10.5 H6.5 Z" fill="#fff" stroke="#8494cc"/><path d="M13 0.5 V3 H15.5" fill="none" stroke="#8494cc"/><path d="M3.5 2.5 H10 L12.5 5 V12.5 H3.5 Z" fill="#fff" stroke="#3a4a80"/><path d="M10 2.5 V5 H12.5" fill="none" stroke="#3a4a80"/><path d="M0.6 4.6 H7 L9.6 7.2 V14.6 H0.6 Z" fill="#fff" stroke="#253260" stroke-width="1.2"/><path d="M7 4.6 V7.2 H9.6" fill="none" stroke="#253260"/><path d="M2.2 9.5H5.5M2.2 11H8M2.2 12.6H8" stroke="#9aa4c8" stroke-width="0.7"/></svg></div>
<div class="t" style="left:769px;top:320px;font-size:10.5px;letter-spacing:-0.3px;color:#000;width:71px;overflow:hidden">THEMEBOXLWD</div>
<div style="left:740px;top:341px;width:9px;height:1px;background-image:linear-gradient(90deg,#7a7a7a 50%,transparent 50%);background-size:2px 1px"></div>
<div style="left:749px;top:333px;width:16px;height:16px;"><svg style="position:absolute;left:0;top:0" width="16" height="16" viewBox="0 0 16 16"><path d="M6.5 0.5 H13 L15.5 3 V10.5 H6.5 Z" fill="#fff" stroke="#8494cc"/><path d="M13 0.5 V3 H15.5" fill="none" stroke="#8494cc"/><path d="M3.5 2.5 H10 L12.5 5 V12.5 H3.5 Z" fill="#fff" stroke="#3a4a80"/><path d="M10 2.5 V5 H12.5" fill="none" stroke="#3a4a80"/><path d="M0.6 4.6 H7 L9.6 7.2 V14.6 H0.6 Z" fill="#fff" stroke="#253260" stroke-width="1.2"/><path d="M7 4.6 V7.2 H9.6" fill="none" stroke="#253260"/><path d="M2.2 9.5H5.5M2.2 11H8M2.2 12.6H8" stroke="#9aa4c8" stroke-width="0.7"/></svg></div>
<div class="t" style="left:769px;top:336px;font-size:10.5px;letter-spacing:-0.3px;color:#000;width:71px;overflow:hidden">ABAROLLFORALL</div>
<div style="left:740px;top:357px;width:9px;height:1px;background-image:linear-gradient(90deg,#7a7a7a 50%,transparent 50%);background-size:2px 1px"></div>
<div style="left:749px;top:349px;width:16px;height:16px;"><svg style="position:absolute;left:0;top:0" width="16" height="16" viewBox="0 0 16 16"><path d="M6.5 0.5 H13 L15.5 3 V10.5 H6.5 Z" fill="#fff" stroke="#8494cc"/><path d="M13 0.5 V3 H15.5" fill="none" stroke="#8494cc"/><path d="M3.5 2.5 H10 L12.5 5 V12.5 H3.5 Z" fill="#fff" stroke="#3a4a80"/><path d="M10 2.5 V5 H12.5" fill="none" stroke="#3a4a80"/><path d="M0.6 4.6 H7 L9.6 7.2 V14.6 H0.6 Z" fill="#fff" stroke="#253260" stroke-width="1.2"/><path d="M7 4.6 V7.2 H9.6" fill="none" stroke="#253260"/><path d="M2.2 9.5H5.5M2.2 11H8M2.2 12.6H8" stroke="#9aa4c8" stroke-width="0.7"/></svg></div>
<div class="t" style="left:769px;top:352px;font-size:10.5px;letter-spacing:-0.3px;color:#000;width:71px;overflow:hidden">SERVERTEMPS</div>
<div style="left:740px;top:373px;width:9px;height:1px;background-image:linear-gradient(90deg,#7a7a7a 50%,transparent 50%);background-size:2px 1px"></div>
<div style="left:749px;top:365px;width:16px;height:16px;"><svg style="position:absolute;left:0;top:0" width="16" height="16" viewBox="0 0 16 16"><path d="M6.5 0.5 H13 L15.5 3 V10.5 H6.5 Z" fill="#fff" stroke="#8494cc"/><path d="M13 0.5 V3 H15.5" fill="none" stroke="#8494cc"/><path d="M3.5 2.5 H10 L12.5 5 V12.5 H3.5 Z" fill="#fff" stroke="#3a4a80"/><path d="M10 2.5 V5 H12.5" fill="none" stroke="#3a4a80"/><path d="M0.6 4.6 H7 L9.6 7.2 V14.6 H0.6 Z" fill="#fff" stroke="#253260" stroke-width="1.2"/><path d="M7 4.6 V7.2 H9.6" fill="none" stroke="#253260"/><path d="M2.2 9.5H5.5M2.2 11H8M2.2 12.6H8" stroke="#9aa4c8" stroke-width="0.7"/></svg></div>
<div class="t" style="left:769px;top:368px;font-size:10.5px;letter-spacing:-0.3px;color:#000;width:71px;overflow:hidden">TV2DFGX</div>
<div style="left:740px;top:389px;width:9px;height:1px;background-image:linear-gradient(90deg,#7a7a7a 50%,transparent 50%);background-size:2px 1px"></div>
<div style="left:749px;top:381px;width:16px;height:16px;"><svg style="position:absolute;left:0;top:0" width="16" height="16" viewBox="0 0 16 16"><path d="M6.5 0.5 H13 L15.5 3 V10.5 H6.5 Z" fill="#fff" stroke="#8494cc"/><path d="M13 0.5 V3 H15.5" fill="none" stroke="#8494cc"/><path d="M3.5 2.5 H10 L12.5 5 V12.5 H3.5 Z" fill="#fff" stroke="#3a4a80"/><path d="M10 2.5 V5 H12.5" fill="none" stroke="#3a4a80"/><path d="M0.6 4.6 H7 L9.6 7.2 V14.6 H0.6 Z" fill="#fff" stroke="#253260" stroke-width="1.2"/><path d="M7 4.6 V7.2 H9.6" fill="none" stroke="#253260"/><path d="M2.2 9.5H5.5M2.2 11H8M2.2 12.6H8" stroke="#9aa4c8" stroke-width="0.7"/></svg></div>
<div class="t" style="left:769px;top:384px;font-size:10.5px;letter-spacing:-0.3px;color:#000;width:71px;overflow:hidden">FUNCSPEC</div>
<div style="left:740px;top:405px;width:9px;height:1px;background-image:linear-gradient(90deg,#7a7a7a 50%,transparent 50%);background-size:2px 1px"></div>
<div style="left:749px;top:397px;width:16px;height:16px;"><svg style="position:absolute;left:0;top:0" width="16" height="16" viewBox="0 0 16 16"><path d="M6.5 0.5 H13 L15.5 3 V10.5 H6.5 Z" fill="#fff" stroke="#8494cc"/><path d="M13 0.5 V3 H15.5" fill="none" stroke="#8494cc"/><path d="M3.5 2.5 H10 L12.5 5 V12.5 H3.5 Z" fill="#fff" stroke="#3a4a80"/><path d="M10 2.5 V5 H12.5" fill="none" stroke="#3a4a80"/><path d="M0.6 4.6 H7 L9.6 7.2 V14.6 H0.6 Z" fill="#fff" stroke="#253260" stroke-width="1.2"/><path d="M7 4.6 V7.2 H9.6" fill="none" stroke="#253260"/><path d="M2.2 9.5H5.5M2.2 11H8M2.2 12.6H8" stroke="#9aa4c8" stroke-width="0.7"/></svg></div>
<div class="t" style="left:769px;top:400px;font-size:10.5px;letter-spacing:-0.3px;color:#000;width:71px;overflow:hidden">PERFORM</div>
<div style="left:740px;top:421px;width:9px;height:1px;background-image:linear-gradient(90deg,#7a7a7a 50%,transparent 50%);background-size:2px 1px"></div>
<div style="left:749px;top:413px;width:16px;height:16px;"><svg style="position:absolute;left:0;top:0" width="16" height="16" viewBox="0 0 16 16"><path d="M6.5 0.5 H13 L15.5 3 V10.5 H6.5 Z" fill="#fff" stroke="#8494cc"/><path d="M13 0.5 V3 H15.5" fill="none" stroke="#8494cc"/><path d="M3.5 2.5 H10 L12.5 5 V12.5 H3.5 Z" fill="#fff" stroke="#3a4a80"/><path d="M10 2.5 V5 H12.5" fill="none" stroke="#3a4a80"/><path d="M0.6 4.6 H7 L9.6 7.2 V14.6 H0.6 Z" fill="#fff" stroke="#253260" stroke-width="1.2"/><path d="M7 4.6 V7.2 H9.6" fill="none" stroke="#253260"/><path d="M2.2 9.5H5.5M2.2 11H8M2.2 12.6H8" stroke="#9aa4c8" stroke-width="0.7"/></svg></div>
<div class="t" style="left:769px;top:416px;font-size:10.5px;letter-spacing:-0.3px;color:#000;width:71px;overflow:hidden">PERFORMBCK</div>
<div style="left:740px;top:437px;width:9px;height:1px;background-image:linear-gradient(90deg,#7a7a7a 50%,transparent 50%);background-size:2px 1px"></div>
<div style="left:749px;top:429px;width:16px;height:16px;"><svg style="position:absolute;left:0;top:0" width="16" height="16" viewBox="0 0 16 16"><path d="M6.5 0.5 H13 L15.5 3 V10.5 H6.5 Z" fill="#fff" stroke="#8494cc"/><path d="M13 0.5 V3 H15.5" fill="none" stroke="#8494cc"/><path d="M3.5 2.5 H10 L12.5 5 V12.5 H3.5 Z" fill="#fff" stroke="#3a4a80"/><path d="M10 2.5 V5 H12.5" fill="none" stroke="#3a4a80"/><path d="M0.6 4.6 H7 L9.6 7.2 V14.6 H0.6 Z" fill="#fff" stroke="#253260" stroke-width="1.2"/><path d="M7 4.6 V7.2 H9.6" fill="none" stroke="#253260"/><path d="M2.2 9.5H5.5M2.2 11H8M2.2 12.6H8" stroke="#9aa4c8" stroke-width="0.7"/></svg></div>
<div class="t" style="left:769px;top:432px;font-size:10.5px;letter-spacing:-0.3px;color:#000;width:71px;overflow:hidden">RECUEALIB</div>
<div style="left:740px;top:453px;width:9px;height:1px;background-image:linear-gradient(90deg,#7a7a7a 50%,transparent 50%);background-size:2px 1px"></div>
<div style="left:749px;top:445px;width:16px;height:16px;"><svg style="position:absolute;left:0;top:0" width="16" height="16" viewBox="0 0 16 16"><path d="M6.5 0.5 H13 L15.5 3 V10.5 H6.5 Z" fill="#fff" stroke="#8494cc"/><path d="M13 0.5 V3 H15.5" fill="none" stroke="#8494cc"/><path d="M3.5 2.5 H10 L12.5 5 V12.5 H3.5 Z" fill="#fff" stroke="#3a4a80"/><path d="M10 2.5 V5 H12.5" fill="none" stroke="#3a4a80"/><path d="M0.6 4.6 H7 L9.6 7.2 V14.6 H0.6 Z" fill="#fff" stroke="#253260" stroke-width="1.2"/><path d="M7 4.6 V7.2 H9.6" fill="none" stroke="#253260"/><path d="M2.2 9.5H5.5M2.2 11H8M2.2 12.6H8" stroke="#9aa4c8" stroke-width="0.7"/></svg></div>
<div class="t" style="left:769px;top:448px;font-size:10.5px;letter-spacing:-0.3px;color:#000;width:71px;overflow:hidden">FLASHCLIPCUE</div>
<div style="left:740px;top:469px;width:9px;height:1px;background-image:linear-gradient(90deg,#7a7a7a 50%,transparent 50%);background-size:2px 1px"></div>
<div style="left:749px;top:461px;width:16px;height:16px;"><svg style="position:absolute;left:0;top:0" width="16" height="16" viewBox="0 0 16 16"><path d="M6.5 0.5 H13 L15.5 3 V10.5 H6.5 Z" fill="#fff" stroke="#8494cc"/><path d="M13 0.5 V3 H15.5" fill="none" stroke="#8494cc"/><path d="M3.5 2.5 H10 L12.5 5 V12.5 H3.5 Z" fill="#fff" stroke="#3a4a80"/><path d="M10 2.5 V5 H12.5" fill="none" stroke="#3a4a80"/><path d="M0.6 4.6 H7 L9.6 7.2 V14.6 H0.6 Z" fill="#fff" stroke="#253260" stroke-width="1.2"/><path d="M7 4.6 V7.2 H9.6" fill="none" stroke="#253260"/><path d="M2.2 9.5H5.5M2.2 11H8M2.2 12.6H8" stroke="#9aa4c8" stroke-width="0.7"/></svg></div>
<div class="t" style="left:769px;top:464px;font-size:10.5px;letter-spacing:-0.3px;color:#000;width:71px;overflow:hidden">EXPRESSEN</div>
<div style="left:740px;top:485px;width:9px;height:1px;background-image:linear-gradient(90deg,#7a7a7a 50%,transparent 50%);background-size:2px 1px"></div>
<div style="left:749px;top:477px;width:16px;height:16px;"><svg style="position:absolute;left:0;top:0" width="16" height="16" viewBox="0 0 16 16"><path d="M6.5 0.5 H13 L15.5 3 V10.5 H6.5 Z" fill="#fff" stroke="#8494cc"/><path d="M13 0.5 V3 H15.5" fill="none" stroke="#8494cc"/><path d="M3.5 2.5 H10 L12.5 5 V12.5 H3.5 Z" fill="#fff" stroke="#3a4a80"/><path d="M10 2.5 V5 H12.5" fill="none" stroke="#3a4a80"/><path d="M0.6 4.6 H7 L9.6 7.2 V14.6 H0.6 Z" fill="#fff" stroke="#253260" stroke-width="1.2"/><path d="M7 4.6 V7.2 H9.6" fill="none" stroke="#253260"/><path d="M2.2 9.5H5.5M2.2 11H8M2.2 12.6H8" stroke="#9aa4c8" stroke-width="0.7"/></svg></div>
<div class="t" style="left:769px;top:480px;font-size:10.5px;letter-spacing:-0.3px;color:#000;width:71px;overflow:hidden">TV2FULLGRAPHICS</div>
<div style="left:740px;top:501px;width:9px;height:1px;background-image:linear-gradient(90deg,#7a7a7a 50%,transparent 50%);background-size:2px 1px"></div>
<div style="left:749px;top:493px;width:16px;height:16px;"><svg style="position:absolute;left:0;top:0" width="16" height="16" viewBox="0 0 16 16"><path d="M6.5 0.5 H13 L15.5 3 V10.5 H6.5 Z" fill="#fff" stroke="#8494cc"/><path d="M13 0.5 V3 H15.5" fill="none" stroke="#8494cc"/><path d="M3.5 2.5 H10 L12.5 5 V12.5 H3.5 Z" fill="#fff" stroke="#3a4a80"/><path d="M10 2.5 V5 H12.5" fill="none" stroke="#3a4a80"/><path d="M0.6 4.6 H7 L9.6 7.2 V14.6 H0.6 Z" fill="#fff" stroke="#253260" stroke-width="1.2"/><path d="M7 4.6 V7.2 H9.6" fill="none" stroke="#253260"/><path d="M2.2 9.5H5.5M2.2 11H8M2.2 12.6H8" stroke="#9aa4c8" stroke-width="0.7"/></svg></div>
<div class="t" style="left:769px;top:496px;font-size:10.5px;letter-spacing:-0.3px;color:#000;width:71px;overflow:hidden">TV2FULLGRAPHICS</div>
<div style="left:740px;top:517px;width:9px;height:1px;background-image:linear-gradient(90deg,#7a7a7a 50%,transparent 50%);background-size:2px 1px"></div>
<div style="left:749px;top:509px;width:16px;height:16px;"><svg style="position:absolute;left:0;top:0" width="16" height="16" viewBox="0 0 16 16"><path d="M6.5 0.5 H13 L15.5 3 V10.5 H6.5 Z" fill="#fff" stroke="#8494cc"/><path d="M13 0.5 V3 H15.5" fill="none" stroke="#8494cc"/><path d="M3.5 2.5 H10 L12.5 5 V12.5 H3.5 Z" fill="#fff" stroke="#3a4a80"/><path d="M10 2.5 V5 H12.5" fill="none" stroke="#3a4a80"/><path d="M0.6 4.6 H7 L9.6 7.2 V14.6 H0.6 Z" fill="#fff" stroke="#253260" stroke-width="1.2"/><path d="M7 4.6 V7.2 H9.6" fill="none" stroke="#253260"/><path d="M2.2 9.5H5.5M2.2 11H8M2.2 12.6H8" stroke="#9aa4c8" stroke-width="0.7"/></svg></div>
<div class="t" style="left:769px;top:512px;font-size:10.5px;letter-spacing:-0.3px;color:#000;width:71px;overflow:hidden">SWR</div>
<div style="left:740px;top:533px;width:9px;height:1px;background-image:linear-gradient(90deg,#7a7a7a 50%,transparent 50%);background-size:2px 1px"></div>
<div style="left:749px;top:525px;width:16px;height:16px;"><svg style="position:absolute;left:0;top:0" width="16" height="16" viewBox="0 0 16 16"><path d="M6.5 0.5 H13 L15.5 3 V10.5 H6.5 Z" fill="#fff" stroke="#8494cc"/><path d="M13 0.5 V3 H15.5" fill="none" stroke="#8494cc"/><path d="M3.5 2.5 H10 L12.5 5 V12.5 H3.5 Z" fill="#fff" stroke="#3a4a80"/><path d="M10 2.5 V5 H12.5" fill="none" stroke="#3a4a80"/><path d="M0.6 4.6 H7 L9.6 7.2 V14.6 H0.6 Z" fill="#fff" stroke="#253260" stroke-width="1.2"/><path d="M7 4.6 V7.2 H9.6" fill="none" stroke="#253260"/><path d="M2.2 9.5H5.5M2.2 11H8M2.2 12.6H8" stroke="#9aa4c8" stroke-width="0.7"/></svg></div>
<div class="t" style="left:769px;top:528px;font-size:10.5px;letter-spacing:-0.3px;color:#000;width:71px;overflow:hidden">FTV</div>
<div style="left:740px;top:549px;width:9px;height:1px;background-image:linear-gradient(90deg,#7a7a7a 50%,transparent 50%);background-size:2px 1px"></div>
<div style="left:749px;top:541px;width:16px;height:16px;"><svg style="position:absolute;left:0;top:0" width="16" height="16" viewBox="0 0 16 16"><path d="M6.5 0.5 H13 L15.5 3 V10.5 H6.5 Z" fill="#fff" stroke="#8494cc"/><path d="M13 0.5 V3 H15.5" fill="none" stroke="#8494cc"/><path d="M3.5 2.5 H10 L12.5 5 V12.5 H3.5 Z" fill="#fff" stroke="#3a4a80"/><path d="M10 2.5 V5 H12.5" fill="none" stroke="#3a4a80"/><path d="M0.6 4.6 H7 L9.6 7.2 V14.6 H0.6 Z" fill="#fff" stroke="#253260" stroke-width="1.2"/><path d="M7 4.6 V7.2 H9.6" fill="none" stroke="#253260"/><path d="M2.2 9.5H5.5M2.2 11H8M2.2 12.6H8" stroke="#9aa4c8" stroke-width="0.7"/></svg></div>
<div class="t" style="left:769px;top:544px;font-size:10.5px;letter-spacing:-0.3px;color:#000;width:71px;overflow:hidden">NRK</div>
<div style="left:740px;top:565px;width:9px;height:1px;background-image:linear-gradient(90deg,#7a7a7a 50%,transparent 50%);background-size:2px 1px"></div>
<div style="left:749px;top:557px;width:16px;height:16px;"><svg style="position:absolute;left:0;top:0" width="16" height="16" viewBox="0 0 16 16"><path d="M6.5 0.5 H13 L15.5 3 V10.5 H6.5 Z" fill="#fff" stroke="#8494cc"/><path d="M13 0.5 V3 H15.5" fill="none" stroke="#8494cc"/><path d="M3.5 2.5 H10 L12.5 5 V12.5 H3.5 Z" fill="#fff" stroke="#3a4a80"/><path d="M10 2.5 V5 H12.5" fill="none" stroke="#3a4a80"/><path d="M0.6 4.6 H7 L9.6 7.2 V14.6 H0.6 Z" fill="#fff" stroke="#253260" stroke-width="1.2"/><path d="M7 4.6 V7.2 H9.6" fill="none" stroke="#253260"/><path d="M2.2 9.5H5.5M2.2 11H8M2.2 12.6H8" stroke="#9aa4c8" stroke-width="0.7"/></svg></div>
<div class="t" style="left:769px;top:560px;font-size:10.5px;letter-spacing:-0.3px;color:#000;width:71px;overflow:hidden">ABC</div>
<div style="left:740px;top:581px;width:9px;height:1px;background-image:linear-gradient(90deg,#7a7a7a 50%,transparent 50%);background-size:2px 1px"></div>
<div style="left:749px;top:573px;width:16px;height:16px;"><svg style="position:absolute;left:0;top:0" width="16" height="16" viewBox="0 0 16 16"><path d="M6.5 0.5 H13 L15.5 3 V10.5 H6.5 Z" fill="#fff" stroke="#8494cc"/><path d="M13 0.5 V3 H15.5" fill="none" stroke="#8494cc"/><path d="M3.5 2.5 H10 L12.5 5 V12.5 H3.5 Z" fill="#fff" stroke="#3a4a80"/><path d="M10 2.5 V5 H12.5" fill="none" stroke="#3a4a80"/><path d="M0.6 4.6 H7 L9.6 7.2 V14.6 H0.6 Z" fill="#fff" stroke="#253260" stroke-width="1.2"/><path d="M7 4.6 V7.2 H9.6" fill="none" stroke="#253260"/><path d="M2.2 9.5H5.5M2.2 11H8M2.2 12.6H8" stroke="#9aa4c8" stroke-width="0.7"/></svg></div>
<div class="t" style="left:769px;top:576px;font-size:10.5px;letter-spacing:-0.3px;color:#000;width:71px;overflow:hidden">REPLACETAKECUE</div>
<div style="left:740px;top:597px;width:9px;height:1px;background-image:linear-gradient(90deg,#7a7a7a 50%,transparent 50%);background-size:2px 1px"></div>
<div style="left:749px;top:589px;width:16px;height:16px;"><svg style="position:absolute;left:0;top:0" width="16" height="16" viewBox="0 0 16 16"><path d="M6.5 0.5 H13 L15.5 3 V10.5 H6.5 Z" fill="#fff" stroke="#8494cc"/><path d="M13 0.5 V3 H15.5" fill="none" stroke="#8494cc"/><path d="M3.5 2.5 H10 L12.5 5 V12.5 H3.5 Z" fill="#fff" stroke="#3a4a80"/><path d="M10 2.5 V5 H12.5" fill="none" stroke="#3a4a80"/><path d="M0.6 4.6 H7 L9.6 7.2 V14.6 H0.6 Z" fill="#fff" stroke="#253260" stroke-width="1.2"/><path d="M7 4.6 V7.2 H9.6" fill="none" stroke="#253260"/><path d="M2.2 9.5H5.5M2.2 11H8M2.2 12.6H8" stroke="#9aa4c8" stroke-width="0.7"/></svg></div>
<div class="t" style="left:769px;top:592px;font-size:10.5px;letter-spacing:-0.3px;color:#000;width:71px;overflow:hidden">ACCESSORIES</div>
<div style="left:740px;top:613px;width:9px;height:1px;background-image:linear-gradient(90deg,#7a7a7a 50%,transparent 50%);background-size:2px 1px"></div>
<div style="left:749px;top:605px;width:16px;height:16px;"><svg style="position:absolute;left:0;top:0" width="16" height="16" viewBox="0 0 16 16"><path d="M6.5 0.5 H13 L15.5 3 V10.5 H6.5 Z" fill="#fff" stroke="#8494cc"/><path d="M13 0.5 V3 H15.5" fill="none" stroke="#8494cc"/><path d="M3.5 2.5 H10 L12.5 5 V12.5 H3.5 Z" fill="#fff" stroke="#3a4a80"/><path d="M10 2.5 V5 H12.5" fill="none" stroke="#3a4a80"/><path d="M0.6 4.6 H7 L9.6 7.2 V14.6 H0.6 Z" fill="#fff" stroke="#253260" stroke-width="1.2"/><path d="M7 4.6 V7.2 H9.6" fill="none" stroke="#253260"/><path d="M2.2 9.5H5.5M2.2 11H8M2.2 12.6H8" stroke="#9aa4c8" stroke-width="0.7"/></svg></div>
<div class="t" style="left:769px;top:608px;font-size:10.5px;letter-spacing:-0.3px;color:#000;width:71px;overflow:hidden">HARRIS</div>
<div style="left:740px;top:629px;width:9px;height:1px;background-image:linear-gradient(90deg,#7a7a7a 50%,transparent 50%);background-size:2px 1px"></div>
<div style="left:749px;top:621px;width:16px;height:16px;"><svg style="position:absolute;left:0;top:0" width="16" height="16" viewBox="0 0 16 16"><path d="M6.5 0.5 H13 L15.5 3 V10.5 H6.5 Z" fill="#fff" stroke="#8494cc"/><path d="M13 0.5 V3 H15.5" fill="none" stroke="#8494cc"/><path d="M3.5 2.5 H10 L12.5 5 V12.5 H3.5 Z" fill="#fff" stroke="#3a4a80"/><path d="M10 2.5 V5 H12.5" fill="none" stroke="#3a4a80"/><path d="M0.6 4.6 H7 L9.6 7.2 V14.6 H0.6 Z" fill="#fff" stroke="#253260" stroke-width="1.2"/><path d="M7 4.6 V7.2 H9.6" fill="none" stroke="#253260"/><path d="M2.2 9.5H5.5M2.2 11H8M2.2 12.6H8" stroke="#9aa4c8" stroke-width="0.7"/></svg></div>
<div class="t" style="left:769px;top:624px;font-size:10.5px;letter-spacing:-0.3px;color:#000;width:71px;overflow:hidden">VIZONE</div>
<div style="left:740px;top:645px;width:9px;height:1px;background-image:linear-gradient(90deg,#7a7a7a 50%,transparent 50%);background-size:2px 1px"></div>
<div style="left:749px;top:637px;width:16px;height:16px;"><svg style="position:absolute;left:0;top:0" width="16" height="16" viewBox="0 0 16 16"><path d="M6.5 0.5 H13 L15.5 3 V10.5 H6.5 Z" fill="#fff" stroke="#8494cc"/><path d="M13 0.5 V3 H15.5" fill="none" stroke="#8494cc"/><path d="M3.5 2.5 H10 L12.5 5 V12.5 H3.5 Z" fill="#fff" stroke="#3a4a80"/><path d="M10 2.5 V5 H12.5" fill="none" stroke="#3a4a80"/><path d="M0.6 4.6 H7 L9.6 7.2 V14.6 H0.6 Z" fill="#fff" stroke="#253260" stroke-width="1.2"/><path d="M7 4.6 V7.2 H9.6" fill="none" stroke="#253260"/><path d="M2.2 9.5H5.5M2.2 11H8M2.2 12.6H8" stroke="#9aa4c8" stroke-width="0.7"/></svg></div>
<div class="t" style="left:769px;top:640px;font-size:10.5px;letter-spacing:-0.3px;color:#000;width:71px;overflow:hidden">BR</div>
<div style="left:740px;top:661px;width:9px;height:1px;background-image:linear-gradient(90deg,#7a7a7a 50%,transparent 50%);background-size:2px 1px"></div>
<div style="left:749px;top:653px;width:16px;height:16px;"><svg style="position:absolute;left:0;top:0" width="16" height="16" viewBox="0 0 16 16"><path d="M6.5 0.5 H13 L15.5 3 V10.5 H6.5 Z" fill="#fff" stroke="#8494cc"/><path d="M13 0.5 V3 H15.5" fill="none" stroke="#8494cc"/><path d="M3.5 2.5 H10 L12.5 5 V12.5 H3.5 Z" fill="#fff" stroke="#3a4a80"/><path d="M10 2.5 V5 H12.5" fill="none" stroke="#3a4a80"/><path d="M0.6 4.6 H7 L9.6 7.2 V14.6 H0.6 Z" fill="#fff" stroke="#253260" stroke-width="1.2"/><path d="M7 4.6 V7.2 H9.6" fill="none" stroke="#253260"/><path d="M2.2 9.5H5.5M2.2 11H8M2.2 12.6H8" stroke="#9aa4c8" stroke-width="0.7"/></svg></div>
<div class="t" style="left:769px;top:656px;font-size:10.5px;letter-spacing:-0.3px;color:#000;width:71px;overflow:hidden">ALL</div>
<div style="left:740px;top:677px;width:9px;height:1px;background-image:linear-gradient(90deg,#7a7a7a 50%,transparent 50%);background-size:2px 1px"></div>
<div style="left:749px;top:669px;width:16px;height:16px;"><svg style="position:absolute;left:0;top:0" width="16" height="16" viewBox="0 0 16 16"><path d="M6.5 0.5 H13 L15.5 3 V10.5 H6.5 Z" fill="#fff" stroke="#8494cc"/><path d="M13 0.5 V3 H15.5" fill="none" stroke="#8494cc"/><path d="M3.5 2.5 H10 L12.5 5 V12.5 H3.5 Z" fill="#fff" stroke="#3a4a80"/><path d="M10 2.5 V5 H12.5" fill="none" stroke="#3a4a80"/><path d="M0.6 4.6 H7 L9.6 7.2 V14.6 H0.6 Z" fill="#fff" stroke="#253260" stroke-width="1.2"/><path d="M7 4.6 V7.2 H9.6" fill="none" stroke="#253260"/><path d="M2.2 9.5H5.5M2.2 11H8M2.2 12.6H8" stroke="#9aa4c8" stroke-width="0.7"/></svg></div>
<div class="t" style="left:769px;top:672px;font-size:10.5px;letter-spacing:-0.3px;color:#000;width:71px;overflow:hidden">VIZRTGRAPHICS</div>
<div style="left:740px;top:693px;width:9px;height:1px;background-image:linear-gradient(90deg,#7a7a7a 50%,transparent 50%);background-size:2px 1px"></div>
<div style="left:749px;top:685px;width:16px;height:16px;"><svg style="position:absolute;left:0;top:0" width="16" height="16" viewBox="0 0 16 16"><path d="M6.5 0.5 H13 L15.5 3 V10.5 H6.5 Z" fill="#fff" stroke="#8494cc"/><path d="M13 0.5 V3 H15.5" fill="none" stroke="#8494cc"/><path d="M3.5 2.5 H10 L12.5 5 V12.5 H3.5 Z" fill="#fff" stroke="#3a4a80"/><path d="M10 2.5 V5 H12.5" fill="none" stroke="#3a4a80"/><path d="M0.6 4.6 H7 L9.6 7.2 V14.6 H0.6 Z" fill="#fff" stroke="#253260" stroke-width="1.2"/><path d="M7 4.6 V7.2 H9.6" fill="none" stroke="#253260"/><path d="M2.2 9.5H5.5M2.2 11H8M2.2 12.6H8" stroke="#9aa4c8" stroke-width="0.7"/></svg></div>
<div class="t" style="left:769px;top:688px;font-size:10.5px;letter-spacing:-0.3px;color:#000;width:71px;overflow:hidden">ITEMDURATION</div>
<div style="left:740px;top:709px;width:9px;height:1px;background-image:linear-gradient(90deg,#7a7a7a 50%,transparent 50%);background-size:2px 1px"></div>
<div style="left:749px;top:701px;width:16px;height:16px;"><svg style="position:absolute;left:0;top:0" width="16" height="16" viewBox="0 0 16 16"><path d="M6.5 0.5 H13 L15.5 3 V10.5 H6.5 Z" fill="#fff" stroke="#8494cc"/><path d="M13 0.5 V3 H15.5" fill="none" stroke="#8494cc"/><path d="M3.5 2.5 H10 L12.5 5 V12.5 H3.5 Z" fill="#fff" stroke="#3a4a80"/><path d="M10 2.5 V5 H12.5" fill="none" stroke="#3a4a80"/><path d="M0.6 4.6 H7 L9.6 7.2 V14.6 H0.6 Z" fill="#fff" stroke="#253260" stroke-width="1.2"/><path d="M7 4.6 V7.2 H9.6" fill="none" stroke="#253260"/><path d="M2.2 9.5H5.5M2.2 11H8M2.2 12.6H8" stroke="#9aa4c8" stroke-width="0.7"/></svg></div>
<div class="t" style="left:769px;top:704px;font-size:10.5px;letter-spacing:-0.3px;color:#000;width:71px;overflow:hidden">SKYIT</div>
<div style="left:740px;top:725px;width:9px;height:1px;background-image:linear-gradient(90deg,#7a7a7a 50%,transparent 50%);background-size:2px 1px"></div>
<div style="left:749px;top:717px;width:16px;height:16px;"><svg style="position:absolute;left:0;top:0" width="16" height="16" viewBox="0 0 16 16"><path d="M6.5 0.5 H13 L15.5 3 V10.5 H6.5 Z" fill="#fff" stroke="#8494cc"/><path d="M13 0.5 V3 H15.5" fill="none" stroke="#8494cc"/><path d="M3.5 2.5 H10 L12.5 5 V12.5 H3.5 Z" fill="#fff" stroke="#3a4a80"/><path d="M10 2.5 V5 H12.5" fill="none" stroke="#3a4a80"/><path d="M0.6 4.6 H7 L9.6 7.2 V14.6 H0.6 Z" fill="#fff" stroke="#253260" stroke-width="1.2"/><path d="M7 4.6 V7.2 H9.6" fill="none" stroke="#253260"/><path d="M2.2 9.5H5.5M2.2 11H8M2.2 12.6H8" stroke="#9aa4c8" stroke-width="0.7"/></svg></div>
<div class="t" style="left:769px;top:720px;font-size:10.5px;letter-spacing:-0.3px;color:#000;width:71px;overflow:hidden">N24</div>
<div style="left:740px;top:741px;width:9px;height:1px;background-image:linear-gradient(90deg,#7a7a7a 50%,transparent 50%);background-size:2px 1px"></div>
<div style="left:749px;top:733px;width:16px;height:16px;"><svg style="position:absolute;left:0;top:0" width="16" height="16" viewBox="0 0 16 16"><path d="M6.5 0.5 H13 L15.5 3 V10.5 H6.5 Z" fill="#fff" stroke="#8494cc"/><path d="M13 0.5 V3 H15.5" fill="none" stroke="#8494cc"/><path d="M3.5 2.5 H10 L12.5 5 V12.5 H3.5 Z" fill="#fff" stroke="#3a4a80"/><path d="M10 2.5 V5 H12.5" fill="none" stroke="#3a4a80"/><path d="M0.6 4.6 H7 L9.6 7.2 V14.6 H0.6 Z" fill="#fff" stroke="#253260" stroke-width="1.2"/><path d="M7 4.6 V7.2 H9.6" fill="none" stroke="#253260"/><path d="M2.2 9.5H5.5M2.2 11H8M2.2 12.6H8" stroke="#9aa4c8" stroke-width="0.7"/></svg></div>
<div class="t" style="left:769px;top:736px;font-size:10.5px;letter-spacing:-0.3px;color:#000;width:71px;overflow:hidden">RTL</div>
<div style="left:740px;top:757px;width:9px;height:1px;background-image:linear-gradient(90deg,#7a7a7a 50%,transparent 50%);background-size:2px 1px"></div>
<div style="left:749px;top:749px;width:16px;height:16px;"><svg style="position:absolute;left:0;top:0" width="16" height="16" viewBox="0 0 16 16"><path d="M6.5 0.5 H13 L15.5 3 V10.5 H6.5 Z" fill="#fff" stroke="#8494cc"/><path d="M13 0.5 V3 H15.5" fill="none" stroke="#8494cc"/><path d="M3.5 2.5 H10 L12.5 5 V12.5 H3.5 Z" fill="#fff" stroke="#3a4a80"/><path d="M10 2.5 V5 H12.5" fill="none" stroke="#3a4a80"/><path d="M0.6 4.6 H7 L9.6 7.2 V14.6 H0.6 Z" fill="#fff" stroke="#253260" stroke-width="1.2"/><path d="M7 4.6 V7.2 H9.6" fill="none" stroke="#253260"/><path d="M2.2 9.5H5.5M2.2 11H8M2.2 12.6H8" stroke="#9aa4c8" stroke-width="0.7"/></svg></div>
<div class="t" style="left:769px;top:752px;font-size:10.5px;letter-spacing:-0.3px;color:#000;width:71px;overflow:hidden">DW</div>
<div style="left:740px;top:773px;width:9px;height:1px;background-image:linear-gradient(90deg,#7a7a7a 50%,transparent 50%);background-size:2px 1px"></div>
<div style="left:749px;top:765px;width:16px;height:16px;"><svg style="position:absolute;left:0;top:0" width="16" height="16" viewBox="0 0 16 16"><path d="M6.5 0.5 H13 L15.5 3 V10.5 H6.5 Z" fill="#fff" stroke="#8494cc"/><path d="M13 0.5 V3 H15.5" fill="none" stroke="#8494cc"/><path d="M3.5 2.5 H10 L12.5 5 V12.5 H3.5 Z" fill="#fff" stroke="#3a4a80"/><path d="M10 2.5 V5 H12.5" fill="none" stroke="#3a4a80"/><path d="M0.6 4.6 H7 L9.6 7.2 V14.6 H0.6 Z" fill="#fff" stroke="#253260" stroke-width="1.2"/><path d="M7 4.6 V7.2 H9.6" fill="none" stroke="#253260"/><path d="M2.2 9.5H5.5M2.2 11H8M2.2 12.6H8" stroke="#9aa4c8" stroke-width="0.7"/></svg></div>
<div class="t" style="left:769px;top:768px;font-size:10.5px;letter-spacing:-0.3px;color:#000;width:71px;overflow:hidden">RFE</div>
<div style="left:740px;top:789px;width:9px;height:1px;background-image:linear-gradient(90deg,#7a7a7a 50%,transparent 50%);background-size:2px 1px"></div>
<div style="left:749px;top:781px;width:16px;height:16px;"><svg style="position:absolute;left:0;top:0" width="16" height="16" viewBox="0 0 16 16"><path d="M6.5 0.5 H13 L15.5 3 V10.5 H6.5 Z" fill="#fff" stroke="#8494cc"/><path d="M13 0.5 V3 H15.5" fill="none" stroke="#8494cc"/><path d="M3.5 2.5 H10 L12.5 5 V12.5 H3.5 Z" fill="#fff" stroke="#3a4a80"/><path d="M10 2.5 V5 H12.5" fill="none" stroke="#3a4a80"/><path d="M0.6 4.6 H7 L9.6 7.2 V14.6 H0.6 Z" fill="#fff" stroke="#253260" stroke-width="1.2"/><path d="M7 4.6 V7.2 H9.6" fill="none" stroke="#253260"/><path d="M2.2 9.5H5.5M2.2 11H8M2.2 12.6H8" stroke="#9aa4c8" stroke-width="0.7"/></svg></div>
<div class="t" style="left:769px;top:784px;font-size:10.5px;letter-spacing:-0.3px;color:#000;width:71px;overflow:hidden">DR</div>
<div style="left:740px;top:805px;width:9px;height:1px;background-image:linear-gradient(90deg,#7a7a7a 50%,transparent 50%);background-size:2px 1px"></div>
<div style="left:749px;top:797px;width:16px;height:16px;"><svg style="position:absolute;left:0;top:0" width="16" height="16" viewBox="0 0 16 16"><path d="M6.5 0.5 H13 L15.5 3 V10.5 H6.5 Z" fill="#fff" stroke="#8494cc"/><path d="M13 0.5 V3 H15.5" fill="none" stroke="#8494cc"/><path d="M3.5 2.5 H10 L12.5 5 V12.5 H3.5 Z" fill="#fff" stroke="#3a4a80"/><path d="M10 2.5 V5 H12.5" fill="none" stroke="#3a4a80"/><path d="M0.6 4.6 H7 L9.6 7.2 V14.6 H0.6 Z" fill="#fff" stroke="#253260" stroke-width="1.2"/><path d="M7 4.6 V7.2 H9.6" fill="none" stroke="#253260"/><path d="M2.2 9.5H5.5M2.2 11H8M2.2 12.6H8" stroke="#9aa4c8" stroke-width="0.7"/></svg></div>
<div class="t" style="left:769px;top:800px;font-size:10.5px;letter-spacing:-0.3px;color:#000;width:71px;overflow:hidden">TV2D2</div>
<div style="left:740px;top:821px;width:9px;height:1px;background-image:linear-gradient(90deg,#7a7a7a 50%,transparent 50%);background-size:2px 1px"></div>
<div style="left:749px;top:813px;width:16px;height:16px;"><svg style="position:absolute;left:0;top:0" width="16" height="16" viewBox="0 0 16 16"><path d="M6.5 0.5 H13 L15.5 3 V10.5 H6.5 Z" fill="#fff" stroke="#8494cc"/><path d="M13 0.5 V3 H15.5" fill="none" stroke="#8494cc"/><path d="M3.5 2.5 H10 L12.5 5 V12.5 H3.5 Z" fill="#fff" stroke="#3a4a80"/><path d="M10 2.5 V5 H12.5" fill="none" stroke="#3a4a80"/><path d="M0.6 4.6 H7 L9.6 7.2 V14.6 H0.6 Z" fill="#fff" stroke="#253260" stroke-width="1.2"/><path d="M7 4.6 V7.2 H9.6" fill="none" stroke="#253260"/><path d="M2.2 9.5H5.5M2.2 11H8M2.2 12.6H8" stroke="#9aa4c8" stroke-width="0.7"/></svg></div>
<div class="t" style="left:769px;top:816px;font-size:10.5px;letter-spacing:-0.3px;color:#000;width:71px;overflow:hidden">DW2</div>
<div style="left:740px;top:837px;width:9px;height:1px;background-image:linear-gradient(90deg,#7a7a7a 50%,transparent 50%);background-size:2px 1px"></div>
<div style="left:749px;top:829px;width:16px;height:16px;"><svg style="position:absolute;left:0;top:0" width="16" height="16" viewBox="0 0 16 16"><path d="M6.5 0.5 H13 L15.5 3 V10.5 H6.5 Z" fill="#fff" stroke="#8494cc"/><path d="M13 0.5 V3 H15.5" fill="none" stroke="#8494cc"/><path d="M3.5 2.5 H10 L12.5 5 V12.5 H3.5 Z" fill="#fff" stroke="#3a4a80"/><path d="M10 2.5 V5 H12.5" fill="none" stroke="#3a4a80"/><path d="M0.6 4.6 H7 L9.6 7.2 V14.6 H0.6 Z" fill="#fff" stroke="#253260" stroke-width="1.2"/><path d="M7 4.6 V7.2 H9.6" fill="none" stroke="#253260"/><path d="M2.2 9.5H5.5M2.2 11H8M2.2 12.6H8" stroke="#9aa4c8" stroke-width="0.7"/></svg></div>
<div class="t" style="left:769px;top:832px;font-size:10.5px;letter-spacing:-0.3px;color:#000;width:71px;overflow:hidden">GMA</div>
<div style="left:740px;top:853px;width:9px;height:1px;background-image:linear-gradient(90deg,#7a7a7a 50%,transparent 50%);background-size:2px 1px"></div>
<div style="left:749px;top:845px;width:16px;height:16px;"><svg style="position:absolute;left:0;top:0" width="16" height="16" viewBox="0 0 16 16"><path d="M6.5 0.5 H13 L15.5 3 V10.5 H6.5 Z" fill="#fff" stroke="#8494cc"/><path d="M13 0.5 V3 H15.5" fill="none" stroke="#8494cc"/><path d="M3.5 2.5 H10 L12.5 5 V12.5 H3.5 Z" fill="#fff" stroke="#3a4a80"/><path d="M10 2.5 V5 H12.5" fill="none" stroke="#3a4a80"/><path d="M0.6 4.6 H7 L9.6 7.2 V14.6 H0.6 Z" fill="#fff" stroke="#253260" stroke-width="1.2"/><path d="M7 4.6 V7.2 H9.6" fill="none" stroke="#253260"/><path d="M2.2 9.5H5.5M2.2 11H8M2.2 12.6H8" stroke="#9aa4c8" stroke-width="0.7"/></svg></div>
<div class="t" style="left:769px;top:848px;font-size:10.5px;letter-spacing:-0.3px;color:#000;width:71px;overflow:hidden">WELT</div>
<div style="left:740px;top:869px;width:9px;height:1px;background-image:linear-gradient(90deg,#7a7a7a 50%,transparent 50%);background-size:2px 1px"></div>
<div style="left:749px;top:861px;width:16px;height:16px;"><svg style="position:absolute;left:0;top:0" width="16" height="16" viewBox="0 0 16 16"><path d="M6.5 0.5 H13 L15.5 3 V10.5 H6.5 Z" fill="#fff" stroke="#8494cc"/><path d="M13 0.5 V3 H15.5" fill="none" stroke="#8494cc"/><path d="M3.5 2.5 H10 L12.5 5 V12.5 H3.5 Z" fill="#fff" stroke="#3a4a80"/><path d="M10 2.5 V5 H12.5" fill="none" stroke="#3a4a80"/><path d="M0.6 4.6 H7 L9.6 7.2 V14.6 H0.6 Z" fill="#fff" stroke="#253260" stroke-width="1.2"/><path d="M7 4.6 V7.2 H9.6" fill="none" stroke="#253260"/><path d="M2.2 9.5H5.5M2.2 11H8M2.2 12.6H8" stroke="#9aa4c8" stroke-width="0.7"/></svg></div>
<div class="t" style="left:769px;top:864px;font-size:10.5px;letter-spacing:-0.3px;color:#000;width:71px;overflow:hidden">BMF</div>
<div style="left:740px;top:885px;width:9px;height:1px;background-image:linear-gradient(90deg,#7a7a7a 50%,transparent 50%);background-size:2px 1px"></div>
<div style="left:749px;top:877px;width:16px;height:16px;"><svg style="position:absolute;left:0;top:0" width="16" height="16" viewBox="0 0 16 16"><path d="M6.5 0.5 H13 L15.5 3 V10.5 H6.5 Z" fill="#fff" stroke="#8494cc"/><path d="M13 0.5 V3 H15.5" fill="none" stroke="#8494cc"/><path d="M3.5 2.5 H10 L12.5 5 V12.5 H3.5 Z" fill="#fff" stroke="#3a4a80"/><path d="M10 2.5 V5 H12.5" fill="none" stroke="#3a4a80"/><path d="M0.6 4.6 H7 L9.6 7.2 V14.6 H0.6 Z" fill="#fff" stroke="#253260" stroke-width="1.2"/><path d="M7 4.6 V7.2 H9.6" fill="none" stroke="#253260"/><path d="M2.2 9.5H5.5M2.2 11H8M2.2 12.6H8" stroke="#9aa4c8" stroke-width="0.7"/></svg></div>
<div class="t" style="left:769px;top:880px;font-size:10.5px;letter-spacing:-0.3px;color:#000;width:71px;overflow:hidden">TESTRETAKE</div>
<div style="left:740px;top:901px;width:9px;height:1px;background-image:linear-gradient(90deg,#7a7a7a 50%,transparent 50%);background-size:2px 1px"></div>
<div style="left:749px;top:893px;width:16px;height:16px;"><svg style="position:absolute;left:0;top:0" width="16" height="16" viewBox="0 0 16 16"><path d="M6.5 0.5 H13 L15.5 3 V10.5 H6.5 Z" fill="#fff" stroke="#8494cc"/><path d="M13 0.5 V3 H15.5" fill="none" stroke="#8494cc"/><path d="M3.5 2.5 H10 L12.5 5 V12.5 H3.5 Z" fill="#fff" stroke="#3a4a80"/><path d="M10 2.5 V5 H12.5" fill="none" stroke="#3a4a80"/><path d="M0.6 4.6 H7 L9.6 7.2 V14.6 H0.6 Z" fill="#fff" stroke="#253260" stroke-width="1.2"/><path d="M7 4.6 V7.2 H9.6" fill="none" stroke="#253260"/><path d="M2.2 9.5H5.5M2.2 11H8M2.2 12.6H8" stroke="#9aa4c8" stroke-width="0.7"/></svg></div>
<div class="t" style="left:769px;top:896px;font-size:10.5px;letter-spacing:-0.3px;color:#000;width:71px;overflow:hidden">GFX1</div>
<div style="left:740px;top:917px;width:9px;height:1px;background-image:linear-gradient(90deg,#7a7a7a 50%,transparent 50%);background-size:2px 1px"></div>
<div style="left:749px;top:909px;width:16px;height:16px;"><svg style="position:absolute;left:0;top:0" width="16" height="16" viewBox="0 0 16 16"><path d="M6.5 0.5 H13 L15.5 3 V10.5 H6.5 Z" fill="#fff" stroke="#8494cc"/><path d="M13 0.5 V3 H15.5" fill="none" stroke="#8494cc"/><path d="M3.5 2.5 H10 L12.5 5 V12.5 H3.5 Z" fill="#fff" stroke="#3a4a80"/><path d="M10 2.5 V5 H12.5" fill="none" stroke="#3a4a80"/><path d="M0.6 4.6 H7 L9.6 7.2 V14.6 H0.6 Z" fill="#fff" stroke="#253260" stroke-width="1.2"/><path d="M7 4.6 V7.2 H9.6" fill="none" stroke="#253260"/><path d="M2.2 9.5H5.5M2.2 11H8M2.2 12.6H8" stroke="#9aa4c8" stroke-width="0.7"/></svg></div>
<div class="t" style="left:769px;top:912px;font-size:10.5px;letter-spacing:-0.3px;color:#000;width:71px;overflow:hidden">GFX2</div>
<div style="left:740px;top:933px;width:9px;height:1px;background-image:linear-gradient(90deg,#7a7a7a 50%,transparent 50%);background-size:2px 1px"></div>
<div style="left:749px;top:925px;width:16px;height:16px;"><svg style="position:absolute;left:0;top:0" width="16" height="16" viewBox="0 0 16 16"><path d="M6.5 0.5 H13 L15.5 3 V10.5 H6.5 Z" fill="#fff" stroke="#8494cc"/><path d="M13 0.5 V3 H15.5" fill="none" stroke="#8494cc"/><path d="M3.5 2.5 H10 L12.5 5 V12.5 H3.5 Z" fill="#fff" stroke="#3a4a80"/><path d="M10 2.5 V5 H12.5" fill="none" stroke="#3a4a80"/><path d="M0.6 4.6 H7 L9.6 7.2 V14.6 H0.6 Z" fill="#fff" stroke="#253260" stroke-width="1.2"/><path d="M7 4.6 V7.2 H9.6" fill="none" stroke="#253260"/><path d="M2.2 9.5H5.5M2.2 11H8M2.2 12.6H8" stroke="#9aa4c8" stroke-width="0.7"/></svg></div>
<div class="t" style="left:769px;top:928px;font-size:10.5px;letter-spacing:-0.3px;color:#000;width:71px;overflow:hidden">GFX3</div>
<div style="left:740px;top:949px;width:9px;height:1px;background-image:linear-gradient(90deg,#7a7a7a 50%,transparent 50%);background-size:2px 1px"></div>
<div style="left:749px;top:941px;width:16px;height:16px;"><svg style="position:absolute;left:0;top:0" width="16" height="16" viewBox="0 0 16 16"><path d="M6.5 0.5 H13 L15.5 3 V10.5 H6.5 Z" fill="#fff" stroke="#8494cc"/><path d="M13 0.5 V3 H15.5" fill="none" stroke="#8494cc"/><path d="M3.5 2.5 H10 L12.5 5 V12.5 H3.5 Z" fill="#fff" stroke="#3a4a80"/><path d="M10 2.5 V5 H12.5" fill="none" stroke="#3a4a80"/><path d="M0.6 4.6 H7 L9.6 7.2 V14.6 H0.6 Z" fill="#fff" stroke="#253260" stroke-width="1.2"/><path d="M7 4.6 V7.2 H9.6" fill="none" stroke="#253260"/><path d="M2.2 9.5H5.5M2.2 11H8M2.2 12.6H8" stroke="#9aa4c8" stroke-width="0.7"/></svg></div>
<div class="t" style="left:769px;top:944px;font-size:10.5px;letter-spacing:-0.3px;color:#000;width:71px;overflow:hidden">TRICASTER</div>
<div style="left:740px;top:965px;width:9px;height:1px;background-image:linear-gradient(90deg,#7a7a7a 50%,transparent 50%);background-size:2px 1px"></div>
<div style="left:749px;top:957px;width:16px;height:16px;"><svg style="position:absolute;left:0;top:0" width="16" height="16" viewBox="0 0 16 16"><path d="M6.5 0.5 H13 L15.5 3 V10.5 H6.5 Z" fill="#fff" stroke="#8494cc"/><path d="M13 0.5 V3 H15.5" fill="none" stroke="#8494cc"/><path d="M3.5 2.5 H10 L12.5 5 V12.5 H3.5 Z" fill="#fff" stroke="#3a4a80"/><path d="M10 2.5 V5 H12.5" fill="none" stroke="#3a4a80"/><path d="M0.6 4.6 H7 L9.6 7.2 V14.6 H0.6 Z" fill="#fff" stroke="#253260" stroke-width="1.2"/><path d="M7 4.6 V7.2 H9.6" fill="none" stroke="#253260"/><path d="M2.2 9.5H5.5M2.2 11H8M2.2 12.6H8" stroke="#9aa4c8" stroke-width="0.7"/></svg></div>
<div class="t" style="left:769px;top:960px;font-size:10.5px;letter-spacing:-0.3px;color:#000;width:71px;overflow:hidden">VMIXER</div>
<div style="left:740px;top:981px;width:9px;height:1px;background-image:linear-gradient(90deg,#7a7a7a 50%,transparent 50%);background-size:2px 1px"></div>
<div style="left:749px;top:973px;width:16px;height:16px;"><svg style="position:absolute;left:0;top:0" width="16" height="16" viewBox="0 0 16 16"><path d="M6.5 0.5 H13 L15.5 3 V10.5 H6.5 Z" fill="#fff" stroke="#8494cc"/><path d="M13 0.5 V3 H15.5" fill="none" stroke="#8494cc"/><path d="M3.5 2.5 H10 L12.5 5 V12.5 H3.5 Z" fill="#fff" stroke="#3a4a80"/><path d="M10 2.5 V5 H12.5" fill="none" stroke="#3a4a80"/><path d="M0.6 4.6 H7 L9.6 7.2 V14.6 H0.6 Z" fill="#fff" stroke="#253260" stroke-width="1.2"/><path d="M7 4.6 V7.2 H9.6" fill="none" stroke="#253260"/><path d="M2.2 9.5H5.5M2.2 11H8M2.2 12.6H8" stroke="#9aa4c8" stroke-width="0.7"/></svg></div>
<div class="t" style="left:769px;top:976px;font-size:10.5px;letter-spacing:-0.3px;color:#000;width:71px;overflow:hidden">VIZGFXLBUPC</div>
<div style="left:740px;top:997px;width:9px;height:1px;background-image:linear-gradient(90deg,#7a7a7a 50%,transparent 50%);background-size:2px 1px"></div>
<div style="left:749px;top:989px;width:16px;height:16px;"><svg style="position:absolute;left:0;top:0" width="16" height="16" viewBox="0 0 16 16"><path d="M6.5 0.5 H13 L15.5 3 V10.5 H6.5 Z" fill="#fff" stroke="#8494cc"/><path d="M13 0.5 V3 H15.5" fill="none" stroke="#8494cc"/><path d="M3.5 2.5 H10 L12.5 5 V12.5 H3.5 Z" fill="#fff" stroke="#3a4a80"/><path d="M10 2.5 V5 H12.5" fill="none" stroke="#3a4a80"/><path d="M0.6 4.6 H7 L9.6 7.2 V14.6 H0.6 Z" fill="#fff" stroke="#253260" stroke-width="1.2"/><path d="M7 4.6 V7.2 H9.6" fill="none" stroke="#253260"/><path d="M2.2 9.5H5.5M2.2 11H8M2.2 12.6H8" stroke="#9aa4c8" stroke-width="0.7"/></svg></div>
<div class="t" style="left:769px;top:992px;font-size:10.5px;letter-spacing:-0.3px;color:#000;width:71px;overflow:hidden">VIZPILOT</div>
<div style="left:840px;top:221px;width:17px;height:17px;background:#d8d8d8;border:1px solid #222"><svg style="position:absolute;left:3px;top:5px" width="9" height="5" viewBox="0 0 9 5"><path d="M0 5 L4.5 0 L9 5 Z" fill="#555"/></svg></div>
<div style="left:840px;top:237px;width:17px;height:736px;background:#a9a9a9;border-left:1px solid #222;border-right:1px solid #222"></div>
<div style="left:840px;top:431px;width:17px;height:202px;background:linear-gradient(90deg,#dcdcdc,#ececec 50%,#d0d0d0);border:1px solid #222"></div>
<div style="left:840px;top:973px;width:17px;height:17px;background:#d8d8d8;border:1px solid #222"><svg style="position:absolute;left:3px;top:5px" width="9" height="5" viewBox="0 0 9 5"><path d="M0 0 L4.5 5 L9 0 Z" fill="#555"/></svg></div>
<div style="left:669px;top:990px;width:188px;height:18px;background:#f0f0f0"></div>
<div style="left:671px;top:991px;width:17px;height:16px;background:#dcdcdc;border:1px solid #999"><svg style="position:absolute;left:5px;top:3px" width="5" height="9" viewBox="0 0 5 9"><path d="M5 0 L0 4.5 L5 9 Z" fill="#555"/></svg></div>
<div style="left:688px;top:991px;width:103px;height:16px;background:linear-gradient(#f0f0f0,#dcdcdc);border:1px solid #999"></div>
<div style="left:791px;top:991px;width:32px;height:16px;background:#b4b4b4;border:1px solid #999"></div>
<div style="left:823px;top:991px;width:17px;height:16px;background:#dcdcdc;border:1px solid #999"><svg style="position:absolute;left:6px;top:3px" width="5" height="9" viewBox="0 0 5 9"><path d="M0 0 L5 4.5 L0 9 Z" fill="#555"/></svg></div>
<div style="left:865px;top:198px;width:689px;height:353px;border:1px solid #141414;background:#fff"></div>
<div style="left:867px;top:200px;width:687px;height:21px;background:#f4f4f4;border-bottom:2px solid #1a1a1a"></div>
<div style="left:867px;top:200px;width:17px;height:21px;border-right:2px solid #1a1a1a"></div>
<div style="left:884px;top:200px;width:45px;height:21px;border-right:2px solid #1a1a1a;overflow:hidden"></div>
<div class="t" style="left:889px;top:204px;font-size:13px;color:#000;width:39px;overflow:hidden">Audio</div>
<div style="left:929px;top:200px;width:45px;height:21px;border-right:2px solid #1a1a1a;overflow:hidden"></div>
<div class="t" style="left:934px;top:204px;font-size:13px;color:#000;width:39px;overflow:hidden">PAGE</div>
<div style="left:974px;top:200px;width:36px;height:21px;border-right:2px solid #1a1a1a;overflow:hidden"></div>
<div class="t" style="left:979px;top:204px;font-size:13px;color:#000;width:30px;overflow:hidden">TAL</div>
<div style="left:1010px;top:200px;width:171px;height:21px;border-right:2px solid #1a1a1a;overflow:hidden"></div>
<div class="t" style="left:1015px;top:204px;font-size:13px;color:#000;width:165px;overflow:hidden">SLUG</div>
<div style="left:1181px;top:200px;width:63px;height:21px;border-right:2px solid #1a1a1a;overflow:hidden"></div>
<div class="t" style="left:1186px;top:204px;font-size:13px;color:#000;width:57px;overflow:hidden">VID-ID</div>
<div style="left:1244px;top:200px;width:45px;height:21px;border-right:2px solid #1a1a1a;overflow:hidden"></div>
<div class="t" style="left:1249px;top:204px;font-size:13px;color:#000;width:39px;overflow:hidden">SHOT</div>
<div style="left:1289px;top:200px;width:81px;height:21px;border-right:2px solid #1a1a1a;overflow:hidden"></div>
<div class="t" style="left:1294px;top:204px;font-size:13px;color:#000;width:75px;overflow:hidden">FORMAT</div>
<div style="left:1370px;top:200px;width:90px;height:21px;border-right:2px solid #1a1a1a;overflow:hidden"></div>
<div class="t" style="left:1375px;top:204px;font-size:13px;color:#000;width:84px;overflow:hidden">GRAPHICS</div>
<div style="left:1460px;top:200px;width:27px;height:21px;border-right:2px solid #1a1a1a;overflow:hidden"></div>
<div class="t" style="left:1465px;top:204px;font-size:13px;color:#000;width:21px;overflow:hidden">CH</div>
<div style="left:1487px;top:200px;width:36px;height:21px;border-right:2px solid #1a1a1a;overflow:hidden"></div>
<div class="t" style="left:1492px;top:204px;font-size:13px;color:#000;width:30px;overflow:hidden">CAM</div>
<div style="left:1523px;top:200px;width:31px;height:21px;border-right:2px solid #1a1a1a;overflow:hidden"></div>
<div class="t" style="left:1528px;top:204px;font-size:13px;color:#000;font-weight:bold;width:25px;overflow:hidden">STATUS</div>
<div style="left:884px;top:221px;width:670px;height:19px;background:#fff"></div>
<div style="left:867px;top:221px;width:17px;height:19px;background:#f4f4f4;border-right:2px solid #1a1a1a;border-bottom:2px solid #1a1a1a"></div>
<div style="left:884px;top:239px;width:670px;height:1px;background:#c0c0c0"></div>
<div class="t" style="left:1013px;top:224px;font-size:13px;color:#000">Manual elements</div>
<div style="left:884px;top:240px;width:670px;height:19px;background:#fff"></div>
<div style="left:867px;top:240px;width:17px;height:19px;background:#f4f4f4;border-right:2px solid #1a1a1a;border-bottom:2px solid #1a1a1a"></div>
<div style="left:884px;top:258px;width:670px;height:1px;background:#c0c0c0"></div>
<div class="t" style="left:1013px;top:243px;font-size:13px;color:#000">Load VR set</div>
<div style="left:884px;top:259px;width:670px;height:19px;background:#fdf9c4"></div>
<div style="left:867px;top:259px;width:17px;height:19px;background:#f4f4f4;border-right:2px solid #1a1a1a;border-bottom:2px solid #1a1a1a"></div>
<div style="left:884px;top:277px;width:670px;height:1px;background:#c0c0c0"></div>
<div class="t" style="left:1013px;top:262px;font-size:13px;color:#000">Story 1</div>
<div class="t" style="left:1184px;top:262px;font-size:13px;color:#000;width:60px;overflow:hidden">VizrtTest2</div>
<div style="left:884px;top:278px;width:670px;height:19px;background:#fff"></div>
<div style="left:867px;top:278px;width:17px;height:19px;background:#f4f4f4;border-right:2px solid #1a1a1a;border-bottom:2px solid #1a1a1a"></div>
<div style="left:884px;top:296px;width:670px;height:1px;background:#c0c0c0"></div>
<div class="t" style="left:1013px;top:281px;font-size:13px;color:#000">Story 2</div>
<div style="left:884px;top:297px;width:670px;height:19px;background:#fdf9c4"></div>
<div style="left:867px;top:297px;width:17px;height:19px;background:#f4f4f4;border-right:2px solid #1a1a1a;border-bottom:2px solid #1a1a1a"></div>
<div style="left:884px;top:315px;width:670px;height:1px;background:#c0c0c0"></div>
<div class="t" style="left:1013px;top:300px;font-size:13px;color:#000">Story 3</div>
<div class="t" style="left:1184px;top:300px;font-size:13px;color:#000;width:60px;overflow:hidden">VizrtTest1</div>
<div style="left:884px;top:316px;width:670px;height:19px;background:#fff"></div>
<div style="left:867px;top:316px;width:17px;height:19px;background:#f4f4f4;border-right:2px solid #1a1a1a;border-bottom:2px solid #1a1a1a"></div>
<div style="left:884px;top:334px;width:670px;height:1px;background:#c0c0c0"></div>
<div class="t" style="left:1013px;top:319px;font-size:13px;color:#000">Story 5</div>
<div style="left:884px;top:335px;width:670px;height:19px;background:#fff"></div>
<div style="left:867px;top:335px;width:17px;height:19px;background:#f4f4f4;border-right:2px solid #1a1a1a;border-bottom:2px solid #1a1a1a"></div>
<div style="left:884px;top:353px;width:670px;height:1px;background:#c0c0c0"></div>
<div class="t" style="left:1013px;top:338px;font-size:13px;color:#000">Story 6</div>
<div style="left:884px;top:354px;width:670px;height:19px;background:#fdf9c4"></div>
<div style="left:867px;top:354px;width:17px;height:19px;background:#f4f4f4;border-right:2px solid #1a1a1a;border-bottom:2px solid #1a1a1a"></div>
<div style="left:884px;top:372px;width:670px;height:1px;background:#c0c0c0"></div>
<div class="t" style="left:1013px;top:357px;font-size:13px;color:#000">Story 7</div>
<div class="t" style="left:1184px;top:357px;font-size:13px;color:#000;width:60px;overflow:hidden">VizrtTest1</div>
<div style="left:884px;top:373px;width:670px;height:19px;background:#fdf9c4"></div>
<div style="left:867px;top:373px;width:17px;height:19px;background:#f4f4f4;border-right:2px solid #1a1a1a;border-bottom:2px solid #1a1a1a"></div>
<div style="left:884px;top:391px;width:670px;height:1px;background:#c0c0c0"></div>
<div class="t" style="left:1013px;top:376px;font-size:13px;color:#000">Story 8</div>
<div class="t" style="left:1184px;top:376px;font-size:13px;color:#000;width:60px;overflow:hidden">VED0074</div>
<div style="left:928px;top:221px;width:1px;height:171px;background:#c0c0c0"></div>
<div style="left:973px;top:221px;width:1px;height:171px;background:#c0c0c0"></div>
<div style="left:1009px;top:221px;width:1px;height:171px;background:#c0c0c0"></div>
<div style="left:1180px;top:221px;width:1px;height:171px;background:#c0c0c0"></div>
<div style="left:1243px;top:221px;width:1px;height:171px;background:#c0c0c0"></div>
<div style="left:1288px;top:221px;width:1px;height:171px;background:#c0c0c0"></div>
<div style="left:1369px;top:221px;width:1px;height:171px;background:#c0c0c0"></div>
<div style="left:1459px;top:221px;width:1px;height:171px;background:#c0c0c0"></div>
<div style="left:1486px;top:221px;width:1px;height:171px;background:#c0c0c0"></div>
<div style="left:1522px;top:221px;width:1px;height:171px;background:#c0c0c0"></div>
<div style="left:1553px;top:221px;width:1px;height:171px;background:#c0c0c0"></div>
<div style="left:1245px;top:240px;width:45px;height:19px;border:2px solid #000"></div>
<div style="left:867px;top:533px;width:687px;height:16px;background:#ececec"></div>
<div style="left:883px;top:534px;width:185px;height:14px;background:#c8c8c8"></div>
<svg style="position:absolute;left:871px;top:537px" width="6" height="9" viewBox="0 0 6 9"><path d="M5 0.5 L1 4.5 L5 8.5" stroke="#444" stroke-width="1.4" fill="none"/></svg>
<svg style="position:absolute;left:1541px;top:537px" width="6" height="9" viewBox="0 0 6 9"><path d="M1 0.5 L5 4.5 L1 8.5" stroke="#444" stroke-width="1.4" fill="none"/></svg>
<div style="left:865px;top:555px;width:689px;height:161px;border:1px solid #141414;background:#e3e3e3;overflow:hidden"></div>
<div style="left:867px;top:557px;width:669px;height:141px;overflow:hidden">
<div class="t" style="left:7px;top:6px;font-size:13px;color:#000;">PAGE</div>
<div class="t" style="left:71px;top:6px;font-size:13px;color:#000;">MOS ACTIVE</div>
<div class="t" style="left:165px;top:6px;font-size:13px;color:#000;font-weight:bold;font-size:14px;letter-spacing:0.4px;">DIRECTTAKE</div>
<div class="t" style="left:277px;top:6px;font-size:13px;color:#000;font-weight:bold;font-size:14px;letter-spacing:0.4px;">DT</div>
<div class="t" style="left:389px;top:6px;font-size:13px;color:#000;font-weight:bold;font-size:14px;letter-spacing:0.4px;">Mosart Type</div>
<div class="t" style="left:507px;top:6px;font-size:13px;color:#000;font-weight:bold;font-size:14px;letter-spacing:0.4px;">Mosart Variant</div>
<div class="t" style="left:625px;top:6px;font-size:13px;color:#000;font-weight:bold;font-size:14px;letter-spacing:0.4px;">Mosart Template</div>
<div style="left:7px;top:20px;width:60px;height:32px;background:#fff;border:1px solid #8a8a8a;border-right-color:#b0b0b0;border-bottom-color:#b0b0b0;overflow:hidden"></div>
<div style="left:71px;top:20px;width:60px;height:32px;background:#fff;border:1px solid #8a8a8a;border-right-color:#b0b0b0;border-bottom-color:#b0b0b0;overflow:hidden"></div>
<div style="left:165px;top:20px;width:60px;height:32px;background:#fff;border:1px solid #8a8a8a;border-right-color:#b0b0b0;border-bottom-color:#b0b0b0;overflow:hidden"></div>
<div style="left:277px;top:20px;width:60px;height:32px;background:#fff;border:1px solid #8a8a8a;border-right-color:#b0b0b0;border-bottom-color:#b0b0b0;overflow:hidden"></div>
<div style="left:389px;top:20px;width:114px;height:32px;background:#fff;border:1px solid #8a8a8a;border-right-color:#b0b0b0;border-bottom-color:#b0b0b0;overflow:hidden"></div>
<div style="left:507px;top:20px;width:114px;height:32px;background:#fff;border:1px solid #8a8a8a;border-right-color:#b0b0b0;border-bottom-color:#b0b0b0;overflow:hidden"></div>
<div style="left:625px;top:20px;width:80px;height:32px;background:#fff;border:1px solid #8a8a8a;border-right-color:#b0b0b0;border-bottom-color:#b0b0b0;overflow:hidden"></div>
<div class="t" style="left:7px;top:58px;font-size:13px;color:#000;">Audio</div>
<div class="t" style="left:71px;top:58px;font-size:13px;color:#000;">TAL</div>
<div class="t" style="left:126px;top:58px;font-size:13px;color:#000;">SLUG</div>
<div class="t" style="left:316px;top:58px;font-size:13px;color:#000;">CAM</div>
<div class="t" style="left:371px;top:58px;font-size:13px;color:#000;">SHOT</div>
<div class="t" style="left:435px;top:58px;font-size:13px;color:#000;">FORMAT</div>
<div class="t" style="left:535px;top:58px;font-size:13px;color:#000;">GRAPHICS</div>
<div class="t" style="left:644px;top:58px;font-size:13px;color:#000;">READY</div>
<div style="left:7px;top:72px;width:60px;height:32px;background:#fff;border:1px solid #8a8a8a;border-right-color:#b0b0b0;border-bottom-color:#b0b0b0;overflow:hidden"></div>
<div style="left:71px;top:72px;width:51px;height:32px;background:#fff;border:1px solid #8a8a8a;border-right-color:#b0b0b0;border-bottom-color:#b0b0b0;overflow:hidden"></div>
<div style="left:126px;top:72px;width:186px;height:32px;background:#fff;border:1px solid #8a8a8a;border-right-color:#b0b0b0;border-bottom-color:#b0b0b0;overflow:hidden"><div class="t" style="left:5px;top:6px;font-size:13px;color:#000">Load VR set</div></div>
<div style="left:316px;top:72px;width:51px;height:32px;background:#fff;border:1px solid #8a8a8a;border-right-color:#b0b0b0;border-bottom-color:#b0b0b0;overflow:hidden"></div>
<div style="left:371px;top:72px;width:60px;height:32px;background:#fff;border:1px solid #8a8a8a;border-right-color:#b0b0b0;border-bottom-color:#b0b0b0;overflow:hidden"></div>
<div style="left:435px;top:72px;width:96px;height:32px;background:#fff;border:1px solid #8a8a8a;border-right-color:#b0b0b0;border-bottom-color:#b0b0b0;overflow:hidden"></div>
<div style="left:535px;top:72px;width:105px;height:32px;background:#fff;border:1px solid #8a8a8a;border-right-color:#b0b0b0;border-bottom-color:#b0b0b0;overflow:hidden"></div>
<div style="left:644px;top:72px;width:60px;height:32px;background:#fff;border:1px solid #8a8a8a;border-right-color:#b0b0b0;border-bottom-color:#b0b0b0;overflow:hidden"><div style="left:2px;top:2px;width:60px;height:26px;background:#ffff00"></div><div class="t" style="left:3px;top:6px;font-size:13px;color:#000">0:00</div></div>
<div class="t" style="left:7px;top:110px;font-size:13px;color:#000;">MODIFIED:</div>
<div class="t" style="left:143px;top:110px;font-size:13px;color:#000;">MOD BY:</div>
<div class="t" style="left:252px;top:110px;font-size:13px;color:#000;">EDITOR</div>
<div class="t" style="left:325px;top:110px;font-size:13px;color:#000;">WRITER</div>
<div class="t" style="left:398px;top:110px;font-size:13px;color:#000;">VID-ID</div>
<div class="t" style="left:480px;top:110px;font-size:13px;color:#000;">CH</div>
<div class="t" style="left:535px;top:110px;font-size:13px;color:#000;">STATUS</div>
<div class="t" style="left:609px;top:110px;font-size:13px;color:#000;">TAPE #</div>
<div style="left:7px;top:124px;width:132px;height:30px;background:#fff;border:1px solid #8a8a8a;border-right-color:#b0b0b0;border-bottom-color:#b0b0b0;overflow:hidden"><div class="t" style="left:5px;top:5px;font-size:13px;color:#a0a0a0">7/2/2023 22:21:16</div></div>
<div style="left:143px;top:124px;width:105px;height:30px;background:#fff;border:1px solid #8a8a8a;border-right-color:#b0b0b0;border-bottom-color:#b0b0b0;overflow:hidden"><div class="t" style="left:5px;top:5px;font-size:13px;color:#a0a0a0">mosart</div></div>
<div style="left:252px;top:124px;width:69px;height:30px;background:#fff;border:1px solid #8a8a8a;border-right-color:#b0b0b0;border-bottom-color:#b0b0b0;overflow:hidden"></div>
<div style="left:325px;top:124px;width:69px;height:30px;background:#fff;border:1px solid #8a8a8a;border-right-color:#b0b0b0;border-bottom-color:#b0b0b0;overflow:hidden"></div>
<div style="left:398px;top:124px;width:78px;height:30px;background:#fff;border:1px solid #8a8a8a;border-right-color:#b0b0b0;border-bottom-color:#b0b0b0;overflow:hidden"></div>
<div style="left:480px;top:124px;width:51px;height:30px;background:#fff;border:1px solid #8a8a8a;border-right-color:#b0b0b0;border-bottom-color:#b0b0b0;overflow:hidden"></div>
<div style="left:535px;top:124px;width:69px;height:30px;background:#fff;border:1px solid #8a8a8a;border-right-color:#b0b0b0;border-bottom-color:#b0b0b0;overflow:hidden"></div>
<div style="left:609px;top:124px;width:80px;height:30px;background:#fff;border:1px solid #8a8a8a;border-right-color:#b0b0b0;border-bottom-color:#b0b0b0;overflow:hidden"></div>
</div>
<div style="left:1536px;top:557px;width:18px;height:141px;background:#ececec"></div>
<div style="left:1537px;top:575px;width:16px;height:94px;background:#c8c8c8"></div>
<svg style="position:absolute;left:1540px;top:562px" width="9" height="6" viewBox="0 0 9 6"><path d="M0.5 5 L4.5 1 L8.5 5" stroke="#444" stroke-width="1.4" fill="none"/></svg>
<svg style="position:absolute;left:1540px;top:686px" width="9" height="6" viewBox="0 0 9 6"><path d="M0.5 1 L4.5 5 L8.5 1" stroke="#444" stroke-width="1.4" fill="none"/></svg>
<div style="left:867px;top:698px;width:669px;height:17px;background:#ececec"></div>
<div style="left:883px;top:699px;width:252px;height:15px;background:#c8c8c8"></div>
<svg style="position:absolute;left:871px;top:702px" width="6" height="9" viewBox="0 0 6 9"><path d="M5 0.5 L1 4.5 L5 8.5" stroke="#444" stroke-width="1.4" fill="none"/></svg>
<svg style="position:absolute;left:1524px;top:702px" width="6" height="9" viewBox="0 0 6 9"><path d="M1 0.5 L5 4.5 L1 8.5" stroke="#444" stroke-width="1.4" fill="none"/></svg>
<div style="left:1536px;top:698px;width:18px;height:17px;background:#ececec"></div>
<div style="left:865px;top:721px;width:158px;height:292px;border:1px solid #141414;background:#ececec"></div>
<div style="left:867px;top:754px;width:154px;height:3px;background:#1a1a1a"></div>
<div style="left:867px;top:757px;width:154px;height:26px;background:#d6d6d6"></div>
<div class="t" style="left:868px;top:760px;font-size:13px;color:#2020c0">*mosart BREAK</div>
<div style="left:867px;top:783px;width:154px;height:2px;background:#1a1a1a"></div>
<div style="left:867px;top:786px;width:154px;height:2px;background:#1a1a1a"></div>
<div style="left:867px;top:788px;width:154px;height:27px;background:#d6d6d6"></div>
<div class="t" style="left:868px;top:792px;font-size:13px;color:#2020c0">*pilot load Vizrt_VSS</div>
<div style="left:867px;top:815px;width:154px;height:2px;background:#1a1a1a"></div>
<div style="left:1026px;top:721px;width:528px;height:292px;border:1px solid #141414;background:#e3e3e3"></div>
<div style="left:1037px;top:757px;width:6px;height:7px;border:1px solid #2020c0"></div>
<div style="left:1037px;top:773px;width:6px;height:7px;border:1px solid #2020c0"></div>
<div style="left:1554px;top:198px;width:1px;height:816px;background:#fff"></div>
<div style="left:1555px;top:198px;width:1px;height:817px;background:#888"></div>
<div style="left:666px;top:1013px;width:889px;height:1px;background:#fff"></div>
<div style="left:666px;top:1014px;width:890px;height:1px;background:#888"></div>
<div style="left:663px;top:1015px;width:895px;height:1px;background:#f4f4f4"></div>
<div style="left:0px;top:1016px;width:1558px;height:1px;background:#fbfbfb"></div>
<div style="left:0px;top:1017px;width:1558px;height:20px;background:#c4c4c4"></div>
<div class="t" style="left:3px;top:1023px;font-size:11px;color:#000">Ready</div>
<div style="left:1224px;top:1018px;width:1px;height:18px;background:#b4b4b4;border-right:1px solid #dcdcdc"></div>
<div style="left:1290px;top:1018px;width:1px;height:18px;background:#b4b4b4;border-right:1px solid #dcdcdc"></div>
<div style="left:1355px;top:1018px;width:1px;height:18px;background:#b4b4b4;border-right:1px solid #dcdcdc"></div>
<div style="left:1415px;top:1019px;width:24px;height:17px;background:#cccccc;border:1px solid #d8d8d8"></div>
<div style="left:1440px;top:1019px;width:31px;height:17px;background:#cccccc;border:1px solid #d8d8d8"></div>
<div style="left:1471px;top:1019px;width:33px;height:17px;background:#cccccc;border:1px solid #d8d8d8"></div>
<div class="t" style="left:1416px;top:1023px;font-size:10px;letter-spacing:-0.2px;color:#a8a8a8">CAP</div>
<div class="t" style="left:1445px;top:1023px;font-size:10px;letter-spacing:-0.2px;color:#a8a8a8">NUM</div>
<div class="t" style="left:1478px;top:1023px;font-size:10px;letter-spacing:-0.2px;color:#000">OVR</div>
<svg style="position:absolute;left:1359px;top:1019px" width="17" height="15" viewBox="0 0 17 15"><path d="M1 1 L7 5 L9 3 L13 9 L15 7 L15 14 L8 14 L10 12 L6 7 L4 9 Z" fill="#ffe800" stroke="#6a5a00" stroke-width="1"/></svg>
<svg style="position:absolute;left:1545px;top:1024px" width="13" height="13" viewBox="0 0 13 13"><path d="M12 1 L1 12 M12 5 L5 12 M12 9 L9 12" stroke="#8a8a8a" stroke-width="1.2"/></svg>
<div style="left:0px;top:1037px;width:1562px;height:3px;background:#fff;border-top:1px solid #6a6a6a"></div>
<div style="left:0px;top:1038px;width:61px;height:2px;background:repeating-linear-gradient(90deg,#404040 0 2px,#b0b0b0 2px 3px)"></div>
<div style="left:168px;top:1038px;width:44px;height:2px;background:repeating-linear-gradient(90deg,#404040 0 2px,#b0b0b0 2px 3px)"></div>
<div style="left:838px;top:1038px;width:11px;height:2px;background:repeating-linear-gradient(90deg,#404040 0 2px,#b0b0b0 2px 3px)"></div>
<div style="left:874px;top:1038px;width:3px;height:2px;background:repeating-linear-gradient(90deg,#404040 0 2px,#b0b0b0 2px 3px)"></div>
<div style="left:902px;top:1038px;width:3px;height:2px;background:repeating-linear-gradient(90deg,#404040 0 2px,#b0b0b0 2px 3px)"></div>
<div style="left:932px;top:1038px;width:11px;height:2px;background:repeating-linear-gradient(90deg,#404040 0 2px,#b0b0b0 2px 3px)"></div>
<div style="left:977px;top:1038px;width:7px;height:2px;background:repeating-linear-gradient(90deg,#404040 0 2px,#b0b0b0 2px 3px)"></div>
<div style="left:1038px;top:1038px;width:8px;height:2px;background:repeating-linear-gradient(90deg,#404040 0 2px,#b0b0b0 2px 3px)"></div>
<div style="left:1074px;top:1038px;width:54px;height:2px;background:repeating-linear-gradient(90deg,#404040 0 2px,#b0b0b0 2px 3px)"></div>
<div style="left:1146px;top:1038px;width:2px;height:2px;background:repeating-linear-gradient(90deg,#404040 0 2px,#b0b0b0 2px 3px)"></div>
<div style="left:1167px;top:1038px;width:14px;height:2px;background:repeating-linear-gradient(90deg,#404040 0 2px,#b0b0b0 2px 3px)"></div>
<div style="left:1193px;top:1038px;width:2px;height:2px;background:repeating-linear-gradient(90deg,#404040 0 2px,#b0b0b0 2px 3px)"></div>
<div style="left:1276px;top:1038px;width:14px;height:2px;background:repeating-linear-gradient(90deg,#404040 0 2px,#b0b0b0 2px 3px)"></div>
<div style="left:1304px;top:1038px;width:5px;height:2px;background:repeating-linear-gradient(90deg,#404040 0 2px,#b0b0b0 2px 3px)"></div>
<div style="left:1351px;top:1038px;width:7px;height:2px;background:repeating-linear-gradient(90deg,#404040 0 2px,#b0b0b0 2px 3px)"></div>
<div style="left:1378px;top:1038px;width:17px;height:2px;background:repeating-linear-gradient(90deg,#404040 0 2px,#b0b0b0 2px 3px)"></div>
<div style="left:1408px;top:1038px;width:17px;height:2px;background:repeating-linear-gradient(90deg,#404040 0 2px,#b0b0b0 2px 3px)"></div>
<div style="left:1442px;top:1038px;width:15px;height:2px;background:repeating-linear-gradient(90deg,#404040 0 2px,#b0b0b0 2px 3px)"></div>
<div style="left:1483px;top:1038px;width:14px;height:2px;background:repeating-linear-gradient(90deg,#404040 0 2px,#b0b0b0 2px 3px)"></div>
<div style="left:1515px;top:1038px;width:16px;height:2px;background:repeating-linear-gradient(90deg,#404040 0 2px,#b0b0b0 2px 3px)"></div>
<div style="left:1555px;top:1038px;width:7px;height:2px;background:repeating-linear-gradient(90deg,#404040 0 2px,#b0b0b0 2px 3px)"></div>
</body></html>
